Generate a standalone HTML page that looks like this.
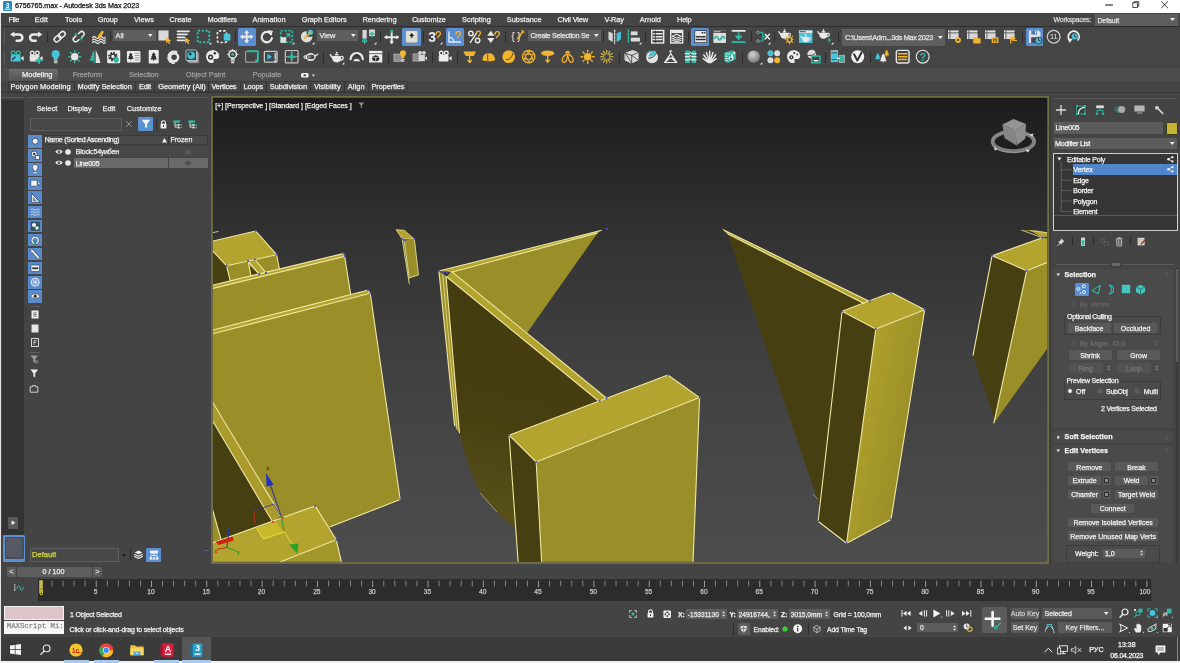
<!DOCTYPE html>
<html><head><meta charset="utf-8"><title>6756765.max - Autodesk 3ds Max 2023</title>
<style>
html,body{margin:0;padding:0}
body{width:1180px;height:663px;position:relative;overflow:hidden;background:#444;font-family:"Liberation Sans",sans-serif;}
.a{position:absolute;display:block}
.t{white-space:nowrap;letter-spacing:0;-webkit-text-stroke:0.25px currentColor}
svg{overflow:visible}
</style></head><body><div id="app" style="position:absolute;left:0;top:0;width:1180px;height:663px;will-change:transform;">
<div class="a" style="left:0px;top:0px;width:1180px;height:13px;background:#ffffff;"></div>
<div class="a" style="left:0px;top:13px;width:1180px;height:650px;background:#444444;"></div>
<svg class="a" style="left:3px;top:1px;" width="9" height="10" viewBox="0 0 9 10"><rect x="0" y="0" width="9" height="10" fill="#1f8fc0" rx="1.3" /><text x="4.5" y="6.6" font-size="6.5" font-weight="bold" fill="#fff" text-anchor="middle" font-family="Liberation Sans,sans-serif">3</text><rect x="1.6" y="7.6" width="5.8" height="1.2" fill="#d5ecf5" /></svg>
<div class="a t" style="top:1.2px;font-size:7.2px;line-height:10px;color:#111;left:14.9px;letter-spacing:-0.071px;">6756765.max - Autodesk 3ds Max 2023</div>
<svg class="a" style="left:1104px;top:0px;" width="70" height="12" viewBox="0 0 70 12"><path d="M1.5 5 H8.5" fill="none" stroke="#111" stroke-width="1.1" stroke-linecap="round" stroke-linejoin="round" /><rect x="28.8" y="2.8" width="4.6" height="4.6" fill="none" stroke="#222" stroke-width="0.8" /><path d="M30.2 2.8 V1.6 H34.8 V6.2 H33.4" fill="none" stroke="#222" stroke-width="0.8" stroke-linecap="round" stroke-linejoin="round" /><path d="M57.6 1.8 L63.6 7.8 M63.6 1.8 L57.6 7.8" fill="none" stroke="#222" stroke-width="0.9" stroke-linecap="round" stroke-linejoin="round" /></svg>
<div class="a" style="left:1.5px;top:13px;width:1178.5px;height:13.3px;background:#454545;"></div>
<div class="a" style="left:1.5px;top:26.3px;width:1178.5px;height:0.9px;background:#2f2f2f;"></div>
<div class="a t" style="top:14.6px;font-size:7.4px;line-height:10px;color:#ececec;left:8.5px;letter-spacing:-0.356px;">File</div>
<div class="a t" style="top:14.6px;font-size:7.4px;line-height:10px;color:#ececec;left:34.7px;letter-spacing:0.137px;">Edit</div>
<div class="a t" style="top:14.6px;font-size:7.4px;line-height:10px;color:#ececec;left:65px;letter-spacing:-0.015px;">Tools</div>
<div class="a t" style="top:14.6px;font-size:7.4px;line-height:10px;color:#ececec;left:97.8px;letter-spacing:-0.113px;">Group</div>
<div class="a t" style="top:14.6px;font-size:7.4px;line-height:10px;color:#ececec;left:133.9px;letter-spacing:0.139px;">Views</div>
<div class="a t" style="top:14.6px;font-size:7.4px;line-height:10px;color:#ececec;left:169.5px;letter-spacing:-0.035px;">Create</div>
<div class="a t" style="top:14.6px;font-size:7.4px;line-height:10px;color:#ececec;left:207.6px;letter-spacing:-0.069px;">Modifiers</div>
<div class="a t" style="top:14.6px;font-size:7.4px;line-height:10px;color:#ececec;left:252.5px;letter-spacing:0.022px;">Animation</div>
<div class="a t" style="top:14.6px;font-size:7.4px;line-height:10px;color:#ececec;left:301.7px;letter-spacing:-0.058px;">Graph Editors</div>
<div class="a t" style="top:14.6px;font-size:7.4px;line-height:10px;color:#ececec;left:362.4px;letter-spacing:0.006px;">Rendering</div>
<div class="a t" style="top:14.6px;font-size:7.4px;line-height:10px;color:#ececec;left:411.9px;letter-spacing:-0.117px;">Customize</div>
<div class="a t" style="top:14.6px;font-size:7.4px;line-height:10px;color:#ececec;left:462px;letter-spacing:0.001px;">Scripting</div>
<div class="a t" style="top:14.6px;font-size:7.4px;line-height:10px;color:#ececec;left:506.8px;letter-spacing:-0.008px;">Substance</div>
<div class="a t" style="top:14.6px;font-size:7.4px;line-height:10px;color:#ececec;left:557.6px;letter-spacing:-0.154px;">Civil View</div>
<div class="a t" style="top:14.6px;font-size:7.4px;line-height:10px;color:#ececec;left:604.4px;letter-spacing:-0.170px;">V-Ray</div>
<div class="a t" style="top:14.6px;font-size:7.4px;line-height:10px;color:#ececec;left:639.7px;letter-spacing:-0.015px;">Arnold</div>
<div class="a t" style="top:14.6px;font-size:7.4px;line-height:10px;color:#ececec;left:677px;letter-spacing:-0.180px;">Help</div>
<div class="a t" style="top:15.3px;font-size:7px;line-height:9px;color:#dcdcdc;left:1053.6px;letter-spacing:-0.266px;">Workspaces:</div>
<div class="a" style="left:1095px;top:14.2px;width:83.2px;height:11.6px;background:#5e5e5e;"></div>
<div class="a t" style="top:15.6px;font-size:7px;line-height:9px;color:#e6e6e6;left:1097.4px;letter-spacing:-0.083px;">Default</div>
<svg class="a" style="left:1169.6px;top:18.2px;" width="5" height="3" viewBox="0 0 5 3"><path d="M0 0 H5 L2.5 3 Z" fill="#eee" /></svg>
<div class="a" style="left:1.5px;top:27.2px;width:1178.5px;height:41.2px;background:#454545;"></div>
<div class="a" style="left:3.5px;top:29px;width:1px;height:17px;background:#5a5a5a;"></div>
<div class="a" style="left:3.5px;top:50px;width:1px;height:16px;background:#5a5a5a;"></div>
<div class="a" style="left:238px;top:28.2px;width:18px;height:17.6px;background:#5b8fd2;border-radius:1.5px;"></div>
<div class="a" style="left:402.4px;top:28.2px;width:18.4px;height:17.6px;background:#5b8fd2;border-radius:1.5px;"></div>
<div class="a" style="left:446px;top:28.2px;width:18px;height:17.6px;background:#5b8fd2;border-radius:1.5px;"></div>
<div class="a" style="left:691px;top:28.2px;width:18.4px;height:17.6px;background:#5b8fd2;border-radius:1.5px;"></div>
<div class="a" style="left:1025.8px;top:28.2px;width:17.2px;height:17.6px;background:#5b8fd2;border-radius:1.5px;"></div>
<svg class="a" style="left:8.8px;top:29.3px;" width="15.4" height="15.4" viewBox="0 0 16 16"><path d="M1.1 5.6 L5.6 2.6 V8.6 Z" fill="#e9e9e9" /><path d="M5.2 5.6 H10.6 a3.3 3.3 0 0 1 0 6.6 H8" fill="none" stroke="#e9e9e9" stroke-width="2.6" stroke-linecap="round" stroke-linejoin="round" stroke-linecap="butt"/></svg>
<svg class="a" style="left:27.8px;top:29.3px;" width="15.4" height="15.4" viewBox="0 0 16 16"><path d="M14.9 5.6 L10.4 2.6 V8.6 Z" fill="#e9e9e9" /><path d="M10.8 5.6 H5.4 a3.3 3.3 0 0 0 0 6.6 H8" fill="none" stroke="#e9e9e9" stroke-width="2.6" stroke-linecap="round" stroke-linejoin="round" stroke-linecap="butt"/></svg>
<svg class="a" style="left:51.7px;top:29.3px;" width="15.4" height="15.4" viewBox="0 0 16 16"><g transform="rotate(-42 8 8)"><rect x="1.2" y="5.5" width="7.6" height="5" fill="none" stroke="#e9e9e9" stroke-width="1.6" rx="2.5" /><rect x="7.2" y="5.5" width="7.6" height="5" fill="none" stroke="#e9e9e9" stroke-width="1.6" rx="2.5" /></g></svg>
<svg class="a" style="left:71.1px;top:29.3px;" width="15.4" height="15.4" viewBox="0 0 16 16"><g transform="rotate(-42 8 8)"><path d="M6.2 5.5 H3.7 a2.5 2.5 0 0 0 0 5 H6.2 M9.8 5.5 H12.3 a2.5 2.5 0 0 1 0 5 H9.8" fill="none" stroke="#e9e9e9" stroke-width="1.6" stroke-linecap="round" stroke-linejoin="round" /><path d="M8 3.2 V5 M8 11 V12.8 M6.3 3.8 L7 5.2 M9.7 12.2 L9 10.8" fill="none" stroke="#2fb8a3" stroke-width="1.1" stroke-linecap="round" stroke-linejoin="round" /></g></svg>
<svg class="a" style="left:90.8px;top:29.3px;" width="15.4" height="15.4" viewBox="0 0 16 16"><path d="M1.5 9 q1.8-2 3.6 0 t3.6 0 t3.6 0 t2.4-0.6 M1.5 11.6 q1.8-2 3.6 0 t3.6 0 t3.6 0 t2.4-0.6 M1.5 14.2 q1.8-2 3.6 0 t3.6 0 t3.6 0 t2.4-0.6" fill="none" stroke="#e9e9e9" stroke-width="1.2" stroke-linecap="round" stroke-linejoin="round" /><path d="M7 9.5 C6.5 7 9 5 10.5 2.5 C11.5 1 14 2 13 4 C12 6 10.5 8 8.8 10 Z" fill="#f3b42c" /></svg>
<svg class="a" style="left:156.6px;top:29.3px;" width="15.4" height="15.4" viewBox="0 0 16 16"><rect x="1.5" y="1.5" width="10.5" height="10.5" fill="#d9d9d9" /><path d="M9.5 8.5 L9.5 15 L11.3 13.3 L12.5 15.8 L13.8 15.2 L12.6 12.8 L15 12.6 Z" fill="#f3b42c" /></svg>
<svg class="a" style="left:176.3px;top:29.3px;" width="15.4" height="15.4" viewBox="0 0 16 16"><path d="M1.5 2.5 H13.5 M1.5 5.6 H11.5 M1.5 8.7 H9 M1.5 11.8 H9" fill="none" stroke="#e9e9e9" stroke-width="1.7" stroke-linecap="round" stroke-linejoin="round" stroke-linecap="butt"/><path d="M9.5 8.5 L9.5 15 L11.3 13.3 L12.5 15.8 L13.8 15.2 L12.6 12.8 L15 12.6 Z" fill="#f3b42c" /></svg>
<svg class="a" style="left:196.3px;top:29.3px;" width="15.4" height="15.4" viewBox="0 0 16 16"><rect x="1.8" y="1.8" width="12" height="12" fill="none" stroke="#2fb8a3" stroke-width="2" stroke-dasharray="2.4 1.6"/><path d="M13.5 16 L16 16 L16 13.5 Z" fill="#e9e9e9" /></svg>
<svg class="a" style="left:216px;top:29.3px;" width="15.4" height="15.4" viewBox="0 0 16 16"><rect x="1.5" y="2" width="9.5" height="12" fill="none" stroke="#e9e9e9" stroke-width="1.7" rx="1.5" stroke-dasharray="2.6 1.8"/><rect x="8" y="5" width="7" height="7" fill="#48c3d8" /></svg>
<svg class="a" style="left:239.3px;top:29.3px;" width="15.4" height="15.4" viewBox="0 0 16 16"><path d="M8 1 L10.6 4.2 H9 V7 H11.8 V5.4 L15 8 L11.8 10.6 V9 H9 V11.8 H10.6 L8 15 L5.4 11.8 H7 V9 H4.2 V10.6 L1 8 L4.2 5.4 V7 H7 V4.2 H5.4 Z" fill="#e9e9e9" /></svg>
<svg class="a" style="left:258.9px;top:29.3px;" width="15.4" height="15.4" viewBox="0 0 16 16"><path d="M12.6 5.4 A5.4 5.4 0 1 0 13.4 9.6" fill="none" stroke="#e9e9e9" stroke-width="2.3" stroke-linecap="round" stroke-linejoin="round" /><path d="M9.2 1 L14.6 2 L12.2 7 Z" fill="#e9e9e9" /></svg>
<svg class="a" style="left:278.8px;top:29.3px;" width="15.4" height="15.4" viewBox="0 0 16 16"><rect x="1.8" y="1.8" width="12" height="12" fill="none" stroke="#2fb8a3" stroke-width="1.7" stroke-dasharray="2.4 1.6"/><rect x="1.5" y="8.5" width="6" height="6" fill="#dcdcdc" /><path d="M7.5 5 H11 V8.5 M11 5 L8 8" fill="none" stroke="#2fb8a3" stroke-width="1.4" stroke-linecap="round" stroke-linejoin="round" /><path d="M13.5 16 L16 16 L16 13.5 Z" fill="#e9e9e9" /></svg>
<svg class="a" style="left:298.8px;top:29.3px;" width="15.4" height="15.4" viewBox="0 0 16 16"><path d="M8 8 L8 2 A6 6 0 1 0 14 8 Z" fill="#dcdcdc" /><circle cx="12" cy="3.5" r="2.6" fill="#48c3d8" /><path d="M6 9.5 L11.5 4" fill="none" stroke="#f3b42c" stroke-width="1.6" stroke-linecap="round" stroke-linejoin="round" /><path d="M13.5 16 L16 16 L16 13.5 Z" fill="#e9e9e9" /></svg>
<svg class="a" style="left:361.3px;top:29.3px;" width="15.4" height="15.4" viewBox="0 0 16 16"><rect x="1.5" y="1" width="4.5" height="9" fill="#d5d5d5" /><rect x="9" y="1" width="5" height="6" fill="#d5d5d5" stroke="#e9e9e9" stroke-width="0.8" /><path d="M3.8 15 V10 M1.8 12 L3.8 10 L5.8 12 M1.8 13.2 H5.8" fill="none" stroke="#2fb8a3" stroke-width="1.3" stroke-linecap="round" stroke-linejoin="round" /><path d="M11.5 8.5 V3.5 M9.5 5.5 L11.5 3.5 L13.5 5.5" fill="none" stroke="#2fb8a3" stroke-width="1.3" stroke-linecap="round" stroke-linejoin="round" /><path d="M13.5 16 L16 16 L16 13.5 Z" fill="#e9e9e9" /></svg>
<svg class="a" style="left:384.3px;top:29.3px;" width="15.4" height="15.4" viewBox="0 0 16 16"><path d="M8 3.5 V14.5 M1.5 8.5 H14.5" fill="none" stroke="#e9e9e9" stroke-width="2" stroke-linecap="round" stroke-linejoin="round" /><path d="M8 14.8 L6.6 12.8 M8 14.8 L9.4 12.8 M1.2 8.5 L3 7.2 M1.2 8.5 L3 9.8 M14.8 8.5 L13 7.2 M14.8 8.5 L13 9.8" fill="none" stroke="#e9e9e9" stroke-width="1.2" stroke-linecap="round" stroke-linejoin="round" /><circle cx="8" cy="2.2" r="1.7" fill="#2fb8a3" /></svg>
<svg class="a" style="left:403.9px;top:29.3px;" width="15.4" height="15.4" viewBox="0 0 16 16"><rect x="1.2" y="1.2" width="13.6" height="13.6" fill="#8a8a86" rx="1.8" /><rect x="2" y="2" width="12" height="12" fill="#deded6" rx="1.2" /><path d="M8 4.2 L5.4 7.2 H7.1 V9.2 H8.9 V7.2 H10.6 Z" fill="#222" /></svg>
<svg class="a" style="left:427px;top:29.3px;" width="15.4" height="15.4" viewBox="0 0 16 16"><text x="5.4" y="13.4" font-family="Liberation Sans,sans-serif" font-size="14.5" fill="#e9e9e9" text-anchor="middle" font-weight="bold">3</text><path d="M9.5 5.5 C9 2.5 13.5 1.5 14 4.5 C14.3 6.5 11.5 7 11 9" fill="none" stroke="#f3b42c" stroke-width="1.3" stroke-linecap="round" stroke-linejoin="round" /><path d="M13.5 16 L16 16 L16 13.5 Z" fill="#e9e9e9" /></svg>
<svg class="a" style="left:447.3px;top:29.3px;" width="15.4" height="15.4" viewBox="0 0 16 16"><path d="M2 3 V13.5 H14 M2 8.5 A5 5 0 0 1 7 13.5" fill="none" stroke="#e9e9e9" stroke-width="1.4" stroke-linecap="round" stroke-linejoin="round" /><path d="M9.5 5.5 C9 2.5 13.5 1.5 14 4.5 C14.3 6.5 11.5 7 11 9" fill="none" stroke="#f3b42c" stroke-width="1.3" stroke-linecap="round" stroke-linejoin="round" /></svg>
<svg class="a" style="left:466.8px;top:29.3px;" width="15.4" height="15.4" viewBox="0 0 16 16"><circle cx="4" cy="4.6" r="2.3" fill="none" stroke="#e9e9e9" stroke-width="1.5" /><circle cx="11" cy="12" r="2.3" fill="none" stroke="#e9e9e9" stroke-width="1.5" /><path d="M3.5 14 L10 4" fill="none" stroke="#e9e9e9" stroke-width="1.5" stroke-linecap="round" stroke-linejoin="round" /><path d="M9.8 4.5 C9.5 2 13.5 1.2 14 4 C14.2 5.5 12.5 6 12 7.5" fill="none" stroke="#f3b42c" stroke-width="1.3" stroke-linecap="round" stroke-linejoin="round" /></svg>
<svg class="a" style="left:486.3px;top:29.3px;" width="15.4" height="15.4" viewBox="0 0 16 16"><path d="M5 1.8 L8.8 7 H1.2 Z M5 14.5 L8.8 9.3 H1.2 Z" fill="#e9e9e9" /><path d="M9.5 5.5 C9 2.5 13.5 1.5 14 4.5 C14.3 6.5 11.5 7 11 9" fill="none" stroke="#f3b42c" stroke-width="1.3" stroke-linecap="round" stroke-linejoin="round" /></svg>
<svg class="a" style="left:510px;top:29.3px;" width="15.4" height="15.4" viewBox="0 0 16 16"><text x="3.2" y="11.8" font-family="Liberation Sans,sans-serif" font-size="11" fill="#e9e9e9" text-anchor="middle">{</text><text x="9.4" y="11.8" font-family="Liberation Sans,sans-serif" font-size="11" fill="#e9e9e9" text-anchor="middle">}</text><path d="M8 10 L13.5 2.5" fill="none" stroke="#f3b42c" stroke-width="1.7" stroke-linecap="round" stroke-linejoin="round" /><path d="M12.2 1.6 L14.6 3.4" fill="none" stroke="#f3b42c" stroke-width="1.2" stroke-linecap="round" stroke-linejoin="round" /></svg>
<svg class="a" style="left:606.6px;top:29.3px;" width="15.4" height="15.4" viewBox="0 0 16 16"><path d="M1.5 2.5 L6 4.5 V13.5 L1.5 11 Z" fill="#d5d5d5" /><path d="M14.5 2.5 L10 4.5 V13.5 L14.5 11 Z" fill="#48c3d8" /><path d="M8 1 V15" fill="none" stroke="#e9e9e9" stroke-width="1.2" stroke-linecap="round" stroke-linejoin="round" stroke-dasharray="2 1.4"/></svg>
<svg class="a" style="left:625.7px;top:29.3px;" width="15.4" height="15.4" viewBox="0 0 16 16"><path d="M2.5 1 V15" fill="none" stroke="#2fb8a3" stroke-width="1.6" stroke-linecap="round" stroke-linejoin="round" stroke-dasharray="2 1.5"/><rect x="5" y="2.5" width="7" height="4" fill="#dcdcdc" /><rect x="5" y="9" width="9.5" height="4" fill="#dcdcdc" /><path d="M13.5 16 L16 16 L16 13.5 Z" fill="#e9e9e9" /></svg>
<svg class="a" style="left:649.5px;top:29.3px;" width="15.4" height="15.4" viewBox="0 0 16 16"><rect x="1.8" y="1.5" width="12.4" height="13" fill="none" stroke="#e9e9e9" stroke-width="1.5" /><path d="M3.5 5 H12.5 M3.5 8 H12.5 M3.5 11 H12.5" fill="none" stroke="#e9e9e9" stroke-width="1.5" stroke-linecap="round" stroke-linejoin="round" stroke-linecap="butt"/><path d="M5.5 2 V14" fill="none" stroke="#333" stroke-width="0.8" stroke-linecap="round" stroke-linejoin="round" /></svg>
<svg class="a" style="left:669.2px;top:29.3px;" width="15.4" height="15.4" viewBox="0 0 16 16"><rect x="1.8" y="1.5" width="12.4" height="13" fill="none" stroke="#e9e9e9" stroke-width="1.5" /><rect x="2.5" y="2" width="11" height="2.2" fill="#e9e9e9" /><path d="M8 5.5 L12.5 7.5 L8 9.5 L3.5 7.5 Z M3.5 9.6 L8 11.6 L12.5 9.6 M3.5 11.6 L8 13.6 L12.5 11.6" fill="none" stroke="#e9e9e9" stroke-width="1.1" stroke-linecap="round" stroke-linejoin="round" /></svg>
<svg class="a" style="left:692.5px;top:29.3px;" width="15.4" height="15.4" viewBox="0 0 16 16"><rect x="1.4" y="1.4" width="13.2" height="13.2" fill="#3a3a3a" rx="1.2" /><rect x="2.2" y="2.2" width="11.6" height="11.6" fill="#e8e8e8" rx="0.6" /><path d="M3.5 8 H7.3 M8.7 8 H12.5 M3.5 11 H7.3 M8.7 11 H12.5" fill="none" stroke="#333" stroke-width="1.6" stroke-linecap="round" stroke-linejoin="round" stroke-linecap="butt"/><rect x="9" y="3" width="1.6" height="1.6" fill="#333" /><rect x="11.2" y="3" width="1.6" height="1.6" fill="#333" /></svg>
<svg class="a" style="left:712.3px;top:29.3px;" width="15.4" height="15.4" viewBox="0 0 16 16"><rect x="1.5" y="1.5" width="13" height="13" fill="#dedede" /><rect x="1.5" y="1.5" width="13" height="2.6" fill="#444" /><path d="M2.8 2.8 h1.2 m1 0 h1.2 m1 0 h1.2" fill="none" stroke="#e9e9e9" stroke-width="0.9" stroke-linecap="round" stroke-linejoin="round" /><path d="M3 9.5 q1.6-3.6 3.3 0 t3.3 0 t3.3 0" fill="none" stroke="#2fb8a3" stroke-width="1.8" stroke-linecap="round" stroke-linejoin="round" /></svg>
<svg class="a" style="left:731.3px;top:29.3px;" width="15.4" height="15.4" viewBox="0 0 16 16"><path d="M1.5 2 H14.5" fill="none" stroke="#e9e9e9" stroke-width="1.7" stroke-linecap="round" stroke-linejoin="round" /><path d="M8 3.8 V9.5 M5 7.5 L8 10.8 L11 7.5 Z" fill="#2fb8a3" stroke="#2fb8a3" stroke-width="1.5" stroke-linecap="round" stroke-linejoin="round" /><path d="M1.5 13.6 H14.5" fill="none" stroke="#2fb8a3" stroke-width="1.9" stroke-linecap="round" stroke-linejoin="round" /></svg>
<svg class="a" style="left:755.3px;top:29.3px;" width="15.4" height="15.4" viewBox="0 0 16 16"><circle cx="3" cy="3.5" r="1.4" fill="none" stroke="#9b9b9b" stroke-width="1" /><circle cx="3" cy="12.5" r="1.4" fill="none" stroke="#9b9b9b" stroke-width="1" /><path d="M4.6 3.5 H8 V12.5 H4.6 M8 8 H10" fill="none" stroke="#2fb8a3" stroke-width="1.2" stroke-linecap="round" stroke-linejoin="round" /><path d="M10.5 5.5 L15 10.5 M15 5.5 L10.5 10.5" fill="none" stroke="#e9e9e9" stroke-width="1.5" stroke-linecap="round" stroke-linejoin="round" /><path d="M13.5 16 L16 16 L16 13.5 Z" fill="#e9e9e9" /></svg>
<svg class="a" style="left:778.8px;top:29.3px;" width="15.4" height="15.4" viewBox="0 0 16 16"><g transform="translate(-1.5,-2.5) scale(0.9)"><path d="M3.2 9.2 C3.2 5.8 12.8 5.8 12.8 9.2 C12.8 12.4 11 14 8 14 C5 14 3.2 12.4 3.2 9.2 Z M5.8 6.2 C6.2 4.6 9.8 4.6 10.2 6.2 Z M3.6 10 C1.8 9 1.4 6.8 0.4 5.8 L1.8 5 C2.6 6.4 3.2 7.2 4.2 7.8 Z" fill="#e9e9e9" /><circle cx="8" cy="3.8" r="1" fill="#e9e9e9" /><path d="M12.4 7.8 C15.4 6.8 15.8 10.8 12.4 11.8" fill="none" stroke="#e9e9e9" stroke-width="1.3" stroke-linecap="round" stroke-linejoin="round" /></g><circle cx="11" cy="11.2" r="2.3" fill="none" stroke="#f3b42c" stroke-width="1.5" /><path d="M11 8.299999999999999 v-1.2 m0 7 v1.2 m-3.5 -4.7 h-1.2 m7 0 h1.2 m-5.9 -2.4 l-0.8 -0.8 m5.7 5.7 l0.8 0.8 m0 -6.5 l-0.8 0.8 m-4.9 4.9 l-0.8 0.8" fill="none" stroke="#f3b42c" stroke-width="1.1" stroke-linecap="round" stroke-linejoin="round" /></svg>
<svg class="a" style="left:798.3px;top:29.3px;" width="15.4" height="15.4" viewBox="0 0 16 16"><rect x="1" y="1.5" width="14" height="13" fill="#48c3d8" /><rect x="1" y="1.5" width="14" height="2.6" fill="#e6e6e6" /><path d="M2.3 2.8 h1.1 m0.9 0 h1.1 m0.9 0 h1.1" fill="none" stroke="#333" stroke-width="1" stroke-linecap="round" stroke-linejoin="round" /><g transform="translate(1.8,2.8) scale(0.78)"><path d="M3.2 9.2 C3.2 5.8 12.8 5.8 12.8 9.2 C12.8 12.4 11 14 8 14 C5 14 3.2 12.4 3.2 9.2 Z M5.8 6.2 C6.2 4.6 9.8 4.6 10.2 6.2 Z M3.6 10 C1.8 9 1.4 6.8 0.4 5.8 L1.8 5 C2.6 6.4 3.2 7.2 4.2 7.8 Z" fill="#e9e9e9" /><circle cx="8" cy="3.8" r="1" fill="#e9e9e9" /><path d="M12.4 7.8 C15.4 6.8 15.8 10.8 12.4 11.8" fill="none" stroke="#e9e9e9" stroke-width="1.3" stroke-linecap="round" stroke-linejoin="round" /></g></svg>
<svg class="a" style="left:817.9px;top:29.3px;" width="15.4" height="15.4" viewBox="0 0 16 16"><g transform="translate(-1.5,-2.5) scale(0.9)"><path d="M3.2 9.2 C3.2 5.8 12.8 5.8 12.8 9.2 C12.8 12.4 11 14 8 14 C5 14 3.2 12.4 3.2 9.2 Z M5.8 6.2 C6.2 4.6 9.8 4.6 10.2 6.2 Z M3.6 10 C1.8 9 1.4 6.8 0.4 5.8 L1.8 5 C2.6 6.4 3.2 7.2 4.2 7.8 Z" fill="#e9e9e9" /><circle cx="8" cy="3.8" r="1" fill="#e9e9e9" /><path d="M12.4 7.8 C15.4 6.8 15.8 10.8 12.4 11.8" fill="none" stroke="#e9e9e9" stroke-width="1.3" stroke-linecap="round" stroke-linejoin="round" /></g><path d="M12 8.5 L9.6 12 H11.6 L10.8 15 L13.8 10.8 H11.8 Z" fill="#2fb8a3" /><path d="M13.5 16 L16 16 L16 13.5 Z" fill="#e9e9e9" /></svg>
<svg class="a" style="left:947.3px;top:29.3px;" width="15.4" height="15.4" viewBox="0 0 16 16"><rect x="1.5" y="2" width="10" height="8" fill="#d9d9d9" /><rect x="1.5" y="2" width="10" height="8" fill="none" stroke="#e9e9e9" stroke-width="0.9" /><path d="M3 2 V11 M1.5 4 H13" fill="none" stroke="#333" stroke-width="0.7" stroke-linecap="round" stroke-linejoin="round" /><circle cx="11.5" cy="11.5" r="3" fill="#f3b42c" /><circle cx="11.5" cy="11.5" r="1.1" fill="#333" /></svg>
<svg class="a" style="left:966px;top:29.3px;" width="15.4" height="15.4" viewBox="0 0 16 16"><rect x="1.5" y="2" width="10" height="8" fill="#d9d9d9" /><rect x="1.5" y="2" width="10" height="8" fill="none" stroke="#e9e9e9" stroke-width="0.9" /><path d="M3 2 V11 M1.5 4 H13" fill="none" stroke="#333" stroke-width="0.7" stroke-linecap="round" stroke-linejoin="round" /><path d="M7.5 8.5 H10.5 L11.3 9.6 H15.2 V15 H7.5 Z" fill="#f3b42c" /></svg>
<svg class="a" style="left:984.3px;top:29.3px;" width="15.4" height="15.4" viewBox="0 0 16 16"><rect x="1.5" y="2" width="10" height="8" fill="#d9d9d9" /><rect x="1.5" y="2" width="10" height="8" fill="none" stroke="#e9e9e9" stroke-width="0.9" /><path d="M3 2 V11 M1.5 4 H13" fill="none" stroke="#333" stroke-width="0.7" stroke-linecap="round" stroke-linejoin="round" /><rect x="8" y="8.5" width="7" height="6" fill="#f3b42c" /><rect x="9.6" y="10" width="3.8" height="3" fill="#333" /><rect x="10.4" y="10.8" width="2.2" height="1.4" fill="#f3b42c" /></svg>
<svg class="a" style="left:1002.6px;top:29.3px;" width="15.4" height="15.4" viewBox="0 0 16 16"><rect x="1.5" y="2" width="10" height="8" fill="#d9d9d9" /><rect x="1.5" y="2" width="10" height="8" fill="none" stroke="#e9e9e9" stroke-width="0.9" /><path d="M3 2 V11 M1.5 4 H13" fill="none" stroke="#333" stroke-width="0.7" stroke-linecap="round" stroke-linejoin="round" /><path d="M8 14.5 V9 M8 9 H11 M9.6 8 L12.4 9.8 L9.6 11.6 Z M11 12 H14" fill="#f3b42c" stroke="#f3b42c" stroke-width="1.2" stroke-linecap="round" stroke-linejoin="round" /></svg>
<svg class="a" style="left:1026.7px;top:29.3px;" width="15.4" height="15.4" viewBox="0 0 16 16"><path d="M2 1.5 H12 L14 3.5 V14.5 H2 Z" fill="#e3e3e3" /><rect x="4.5" y="1.5" width="6" height="4.3" fill="#4a78b8" /><rect x="8.3" y="2.2" width="1.4" height="2.8" fill="#e3e3e3" /><rect x="4.3" y="8.6" width="7.4" height="5.9" fill="#3d4a60" /><circle cx="12" cy="12" r="3.6" fill="#48c3d8" stroke="#2c2c2c" stroke-width="0.8" /><path d="M12 10 V12.2 H13.8" fill="none" stroke="#333" stroke-width="1" stroke-linecap="round" stroke-linejoin="round" /></svg>
<svg class="a" style="left:1046.3px;top:29.3px;" width="15.4" height="15.4" viewBox="0 0 16 16"><circle cx="8" cy="8" r="6.6" fill="none" stroke="#cfcfcf" stroke-width="1.3" /><text x="8" y="10.7" font-family="Liberation Sans,sans-serif" font-size="7.6" fill="#e0e0e0" text-anchor="middle">11</text></svg>
<svg class="a" style="left:1066.1px;top:29.3px;" width="15.4" height="15.4" viewBox="0 0 16 16"><path d="M4.2 12 A5.6 5.6 0 1 1 12.6 11.2" fill="none" stroke="#e9e9e9" stroke-width="1.9" stroke-linecap="round" stroke-linejoin="round" /><path d="M1.6 9.6 L6.8 10.4 L3.8 14.6 Z" fill="#e9e9e9" /><circle cx="9" cy="7.8" r="3.1" fill="#48c3d8" /><path d="M9 6 V8 H10.4" fill="none" stroke="#333" stroke-width="0.9" stroke-linecap="round" stroke-linejoin="round" /></svg>
<div class="a" style="left:47.15px;top:31.4px;width:0.9px;height:10.8px;background:#2c2c2c;"></div>
<div class="a" style="left:109.55px;top:31.4px;width:0.9px;height:10.8px;background:#2c2c2c;"></div>
<div class="a" style="left:234.95px;top:31.4px;width:0.9px;height:10.8px;background:#2c2c2c;"></div>
<div class="a" style="left:379.85px;top:31.4px;width:0.9px;height:10.8px;background:#2c2c2c;"></div>
<div class="a" style="left:422.75px;top:31.4px;width:0.9px;height:10.8px;background:#2c2c2c;"></div>
<div class="a" style="left:505.25px;top:31.4px;width:0.9px;height:10.8px;background:#2c2c2c;"></div>
<div class="a" style="left:602.55px;top:31.4px;width:0.9px;height:10.8px;background:#2c2c2c;"></div>
<div class="a" style="left:645.25px;top:31.4px;width:0.9px;height:10.8px;background:#2c2c2c;"></div>
<div class="a" style="left:687.95px;top:31.4px;width:0.9px;height:10.8px;background:#2c2c2c;"></div>
<div class="a" style="left:750.55px;top:31.4px;width:0.9px;height:10.8px;background:#2c2c2c;"></div>
<div class="a" style="left:774.35px;top:31.4px;width:0.9px;height:10.8px;background:#2c2c2c;"></div>
<div class="a" style="left:838.15px;top:31.4px;width:0.9px;height:10.8px;background:#2c2c2c;"></div>
<div class="a" style="left:1021.55px;top:31.4px;width:0.9px;height:10.8px;background:#2c2c2c;"></div>
<div class="a" style="left:113px;top:29.6px;width:42.6px;height:11.6px;background:#5e5e5e;"></div>
<div class="a t" style="top:30.6px;font-size:7.3px;line-height:10px;color:#e2e2e2;left:115.6px;">All</div>
<svg class="a" style="left:148.4px;top:34.2px;" width="4.6" height="3" viewBox="0 0 4.6 3"><path d="M0 0 H4.6 L2.3 3 Z" fill="#f0f0f0" /></svg>
<div class="a" style="left:316.6px;top:29.6px;width:41.2px;height:11.6px;background:#5e5e5e;"></div>
<div class="a t" style="top:30.6px;font-size:7.3px;line-height:10px;color:#e2e2e2;left:319.6px;">View</div>
<svg class="a" style="left:350.6px;top:34.2px;" width="4.6" height="3" viewBox="0 0 4.6 3"><path d="M0 0 H4.6 L2.3 3 Z" fill="#f0f0f0" /></svg>
<div class="a" style="left:528px;top:29.6px;width:73px;height:11.6px;background:#5e5e5e;"></div>
<div class="a t" style="top:30.6px;font-size:7.3px;line-height:10px;color:#e2e2e2;left:530.4px;letter-spacing:-0.322px;">Create Selection Se</div>
<svg class="a" style="left:593.8px;top:34.2px;" width="4.6" height="3" viewBox="0 0 4.6 3"><path d="M0 0 H4.6 L2.3 3 Z" fill="#f0f0f0" /></svg>
<div class="a" style="left:842px;top:29.2px;width:103px;height:17.2px;background:#5e5e5e;"></div>
<div class="a t" style="top:33px;font-size:7.3px;line-height:10px;color:#e2e2e2;left:845px;letter-spacing:-0.347px;">C:\Users\Adm...3ds Max 2023</div>
<svg class="a" style="left:937.8px;top:36.4px;" width="4.6" height="3" viewBox="0 0 4.6 3"><path d="M0 0 H4.6 L2.3 3 Z" fill="#f0f0f0" /></svg>
<svg class="a" style="left:8.5px;top:49.4px;" width="15.4" height="15.4" viewBox="0 0 16 16"><circle cx="4.4" cy="4.2" r="2.6" fill="#2fb8a3" /><circle cx="9.7" cy="4.2" r="2.6" fill="#2fb8a3" /><circle cx="4.4" cy="4.2" r="1.2" fill="#333" /><circle cx="9.7" cy="4.2" r="1.2" fill="#333" /><rect x="1.8" y="6.2" width="10.2" height="6.8" fill="#48c3d8" rx="1" /><path d="M12 9.5 L15.2 7.2 V12.2 Z" fill="#e9e9e9" /><path d="M3.6 11 L6.4 8.4" fill="none" stroke="#333" stroke-width="1.3" stroke-linecap="round" stroke-linejoin="round" /></svg>
<svg class="a" style="left:28.1px;top:49.4px;" width="15.4" height="15.4" viewBox="0 0 16 16"><circle cx="4.4" cy="4.2" r="2.6" fill="#e3e3e3" /><circle cx="9.7" cy="4.2" r="2.6" fill="#e3e3e3" /><circle cx="4.4" cy="4.2" r="1.2" fill="#333" /><circle cx="9.7" cy="4.2" r="1.2" fill="#333" /><rect x="1.8" y="6.2" width="10.2" height="6.8" fill="#e3e3e3" rx="1" /><path d="M12 9.5 L15.2 7.2 V12.2 Z" fill="#e9e9e9" /><path d="M11.5 9 V14.5 M8.8 11.8 H14.2" fill="none" stroke="#2fb8a3" stroke-width="2.1" stroke-linecap="round" stroke-linejoin="round" /></svg>
<svg class="a" style="left:47.9px;top:49.4px;" width="15.4" height="15.4" viewBox="0 0 16 16"><path d="M8 1 C3.6 1 2.4 6 5.6 9.4 C6 10 6.2 10.8 6.2 11.4 H9.8 C9.8 10.8 10 10 10.4 9.4 C13.6 6 12.4 1 8 1 Z" fill="#48c3d8" /><path d="M6.4 12.6 H9.6 M6.8 14.2 H9.2" fill="none" stroke="#e9e9e9" stroke-width="1.1" stroke-linecap="round" stroke-linejoin="round" /></svg>
<svg class="a" style="left:67.3px;top:49.4px;" width="15.4" height="15.4" viewBox="0 0 16 16"><circle cx="8" cy="8" r="3.9" fill="#e3e3e3" /><path d="M8 1.8 V2.9 M8 13.1 V14.2 M1.8 8 H2.9 M13.1 8 H14.2 M3.6 3.6 L4.4 4.4 M11.6 11.6 L12.4 12.4 M12.4 3.6 L11.6 4.4 M3.6 12.4 L4.4 11.6" fill="none" stroke="#2fb8a3" stroke-width="1.6" stroke-linecap="round" stroke-linejoin="round" /></svg>
<svg class="a" style="left:87px;top:49.4px;" width="15.4" height="15.4" viewBox="0 0 16 16"><path d="M9 1 L9 14.5 H14 C13 10 11 4 9 1 Z" fill="#e3e3e3" /><path d="M7.5 1.2 l-2.6 4 h1.1 l-2.3 3.2 h1.2 l-2.7 3.8 h4.6 v2.3 h1.2 Z" fill="#2fb8a3" /></svg>
<svg class="a" style="left:106.4px;top:49.4px;" width="15.4" height="15.4" viewBox="0 0 16 16"><rect x="1.2" y="1.2" width="13.6" height="13.6" fill="#ececec" rx="1.4" /><circle cx="7.2" cy="7.8" r="3.6" fill="none" stroke="#2e2e2e" stroke-width="2.6" stroke-dasharray="1.7 1.1"/><circle cx="7.2" cy="7.8" r="2.5" fill="none" stroke="#2e2e2e" stroke-width="1.4" /><circle cx="10.6" cy="11.4" r="2.8" fill="#2fb8a3" /></svg>
<svg class="a" style="left:126.3px;top:49.4px;" width="15.4" height="15.4" viewBox="0 0 16 16"><rect x="1" y="2" width="14" height="12" fill="#ececec" rx="1" /><g transform="translate(1.2,2.8) scale(0.62)"><path d="M6 1.5 l-3 4 h1.3 l-2.3 3.2 h1.4 l-2.4 3.5 h4.3 v2 h1.4 v-2 h4.3 l-2.4 -3.5 h1.4 l-2.3 -3.2 h1.3 Z" fill="#2e2e2e" /></g><path d="M9.5 4.5 H13.5 M9.5 6.8 H13.5 M9.5 9.1 H13.5 M9.5 11.4 H13.5" fill="none" stroke="#9b9b9b" stroke-width="1.1" stroke-linecap="round" stroke-linejoin="round" stroke-linecap="butt"/></svg>
<svg class="a" style="left:145.9px;top:49.4px;" width="15.4" height="15.4" viewBox="0 0 16 16"><rect x="2.8" y="1" width="10.4" height="14" fill="#ececec" rx="1" /><g transform="translate(2.6,2.2) scale(0.72)"><path d="M7.5 1.5 l-3 4 h1.3 l-2.3 3.2 h1.4 l-2.4 3.5 h4.3 v2 h1.4 v-2 h4.3 l-2.4 -3.5 h1.4 l-2.3 -3.2 h1.3 Z" fill="#2e2e2e" /></g></svg>
<svg class="a" style="left:166.1px;top:49.4px;" width="15.4" height="15.4" viewBox="0 0 16 16"><circle cx="8.4" cy="8.6" r="4.2" fill="none" stroke="#e9e9e9" stroke-width="2.6" /><path d="M3.1 5.6 A6.1 6.1 0 0 0 8.4 14.7 M3.1 5.6 A6.1 6.1 0 0 1 11 3.1" fill="none" stroke="#e9e9e9" stroke-width="2" stroke-linecap="round" stroke-linejoin="round" stroke-dasharray="1.8 1.7" stroke-linecap="butt"/></svg>
<svg class="a" style="left:185.2px;top:49.4px;" width="15.4" height="15.4" viewBox="0 0 16 16"><rect x="3.6" y="3.8" width="11" height="11" fill="#8d8d8d" rx="1" /><rect x="2.2" y="2.4" width="11" height="11" fill="#b5b5b5" rx="1" /><rect x="1" y="1" width="11" height="11" fill="#2b4c5a" stroke="#d0d0d0" stroke-width="0.8" rx="1" /><circle cx="6.4" cy="6.4" r="3.9" fill="#48c3d8" /><circle cx="5.4" cy="5.2" r="1.5" fill="#1f2f3a" /></svg>
<svg class="a" style="left:204.9px;top:49.4px;" width="15.4" height="15.4" viewBox="0 0 16 16"><path d="M8 1.4 C3.5 1.4 1 4.8 1.2 8.2 C1.4 12 4.4 14.6 7.4 14.6 C9.4 14.6 9.4 12.8 8.8 12 C8.2 11 9 10.2 10.2 10.4 C13 10.8 14.8 9.6 14.8 7.2 C14.8 4 12 1.4 8 1.4 Z" fill="#ececec" /><circle cx="5.8" cy="8.4" r="2.7" fill="#2e2e2e" /><circle cx="5.8" cy="8.4" r="1.2" fill="#ececec" /><circle cx="10.2" cy="4.4" r="1.3" fill="#2e2e2e" /></svg>
<svg class="a" style="left:224.9px;top:49.4px;" width="15.4" height="15.4" viewBox="0 0 16 16"><circle cx="8" cy="5.6" r="3.9" fill="none" stroke="#e9e9e9" stroke-width="1.6" /><circle cx="8" cy="5.6" r="1.5" fill="#2fb8a3" /><path d="M8 0.6 V1.4 M3.2 5.6 H2.4 M13.6 5.6 H12.8 M4.6 2.2 L4 1.6 M11.4 2.2 L12 1.6" fill="none" stroke="#e9e9e9" stroke-width="1" stroke-linecap="round" stroke-linejoin="round" /><path d="M6.4 10.6 H9.6 M6.4 12.4 H9.6 M6.9 14.2 H9.1" fill="none" stroke="#e9e9e9" stroke-width="1.2" stroke-linecap="round" stroke-linejoin="round" /></svg>
<svg class="a" style="left:244.3px;top:49.4px;" width="15.4" height="15.4" viewBox="0 0 16 16"><rect x="1.6" y="2.4" width="12.8" height="11.2" fill="none" stroke="#9b9b9b" stroke-width="1.3" rx="1" /><path d="M4 2.4 H14.4 V12" fill="none" stroke="#2fb8a3" stroke-width="2" stroke-linecap="round" stroke-linejoin="round" /><rect x="11.6" y="11" width="2.8" height="2.6" fill="#2fb8a3" /></svg>
<svg class="a" style="left:263.3px;top:49.4px;" width="15.4" height="15.4" viewBox="0 0 16 16"><rect x="1.4" y="2.4" width="13.2" height="11.2" fill="none" stroke="#c9c9c9" stroke-width="1.3" rx="1" /><rect x="2.6" y="3.6" width="8.6" height="8.8" fill="#3b4b55" /><path d="M4.6 5.2 L9.4 8 L4.6 10.8 Z" fill="#48c3d8" /><rect x="12" y="4" width="1.8" height="7" fill="#c9c9c9" /><rect x="11.8" y="11.8" width="2.2" height="2" fill="#e9e9e9" /></svg>
<svg class="a" style="left:283.7px;top:49.4px;" width="15.4" height="15.4" viewBox="0 0 16 16"><rect x="1.4" y="1.6" width="13.2" height="12.8" fill="none" stroke="#c9c9c9" stroke-width="1.2" rx="1" /><path d="M8 1.6 V14.4 M1.4 8 H14.6" fill="none" stroke="#9b9b9b" stroke-width="1.2" stroke-linecap="round" stroke-linejoin="round" /><path d="M8 5.4 V10.6 M5 8 H11" fill="none" stroke="#2fb8a3" stroke-width="2.2" stroke-linecap="round" stroke-linejoin="round" /></svg>
<svg class="a" style="left:302.8px;top:49.4px;" width="15.4" height="15.4" viewBox="0 0 16 16"><ellipse cx="8" cy="8.2" rx="4.6" ry="3.2" fill="none" stroke="#e9e9e9" stroke-width="1.3" /><path d="M12.4 7.4 C14 6.6 14.6 6 15.4 5 M3.6 7.6 C1.4 6.4 0.4 7.8 1.6 9.4 L3.8 9.8 M5.4 11.6 H10.6 M6.6 5 H9.4" fill="none" stroke="#e9e9e9" stroke-width="1.2" stroke-linecap="round" stroke-linejoin="round" /><circle cx="6.4" cy="8.2" r="1.2" fill="#333" stroke="#e9e9e9" stroke-width="0.6" /></svg>
<svg class="a" style="left:329.2px;top:49.4px;" width="15.4" height="15.4" viewBox="0 0 16 16"><path d="M3.2 9.2 C3.2 5.8 12.8 5.8 12.8 9.2 C12.8 12.4 11 14 8 14 C5 14 3.2 12.4 3.2 9.2 Z M5.8 6.2 C6.2 4.6 9.8 4.6 10.2 6.2 Z M3.6 10 C1.8 9 1.4 6.8 0.4 5.8 L1.8 5 C2.6 6.4 3.2 7.2 4.2 7.8 Z" fill="#e9e9e9" /><circle cx="8" cy="3.8" r="1" fill="#e9e9e9" /><path d="M12.4 7.8 C15.4 6.8 15.8 10.8 12.4 11.8" fill="none" stroke="#e9e9e9" stroke-width="1.3" stroke-linecap="round" stroke-linejoin="round" /><path d="M13.5 16 L16 16 L16 13.5 Z" fill="#e9e9e9" /></svg>
<svg class="a" style="left:348.8px;top:49.4px;" width="15.4" height="15.4" viewBox="0 0 16 16"><path d="M1.6 10.6 A6.4 6.4 0 0 1 14.4 10.6" fill="none" stroke="#e9e9e9" stroke-width="2.3" stroke-linecap="round" stroke-linejoin="round" /><path d="M4.2 12.8 A4 4 0 0 1 11.8 12.8 Z" fill="#e9e9e9" /><path d="M5 8.2 L8 5.6 L11 8.2" fill="none" stroke="#333" stroke-width="1.2" stroke-linecap="round" stroke-linejoin="round" /></svg>
<svg class="a" style="left:368.3px;top:49.4px;" width="15.4" height="15.4" viewBox="0 0 16 16"><rect x="1.2" y="2" width="13.6" height="12" fill="#ececec" /><rect x="1.2" y="2" width="13.6" height="2.4" fill="#ececec" /><path d="M1.2 4.8 H14.8" fill="none" stroke="#333" stroke-width="0.7" stroke-linecap="round" stroke-linejoin="round" /><path d="M8 6.4 L11.6 7.8 V11.6 L8 13 L4.4 11.6 V7.8 Z" fill="#2e2e2e" /><path d="M4.4 7.8 L8 9.2 L11.6 7.8 M8 9.2 V13" fill="none" stroke="#e9e9e9" stroke-width="0.7" stroke-linecap="round" stroke-linejoin="round" /></svg>
<svg class="a" style="left:393px;top:49.4px;" width="15.4" height="15.4" viewBox="0 0 16 16"><rect x="1" y="5.4" width="8.6" height="7.4" fill="#8c8c8c" stroke="#b5b5b5" stroke-width="0.9" /><path d="M10.4 1.2 C7 1.2 6.2 5 8.6 7.6 C9 8.2 9 8.8 9 9.4 H11.8 C11.8 8.8 11.8 8.2 12.2 7.6 C14.6 5 13.8 1.2 10.4 1.2 Z" fill="#f3b42c" /><path d="M9.2 11 H11.6 M9.2 12.6 H11.6" fill="none" stroke="#e9e9e9" stroke-width="1" stroke-linecap="round" stroke-linejoin="round" /></svg>
<svg class="a" style="left:412.3px;top:49.4px;" width="15.4" height="15.4" viewBox="0 0 16 16"><rect x="1" y="5" width="7.4" height="7.6" fill="#8c8c8c" stroke="#a8a8a8" stroke-width="0.8" /><circle cx="8.4" cy="4" r="2" fill="#d9d9d9" /><circle cx="12.4" cy="4" r="2" fill="#d9d9d9" /><rect x="7" y="6.2" width="6.4" height="6.4" fill="#d9d9d9" /><path d="M13.4 9.4 L15.6 7.6 V12 Z" fill="#d9d9d9" /></svg>
<svg class="a" style="left:436.7px;top:49.4px;" width="15.4" height="15.4" viewBox="0 0 16 16"><circle cx="4.4" cy="4.2" r="2.6" fill="#ececec" /><circle cx="9.7" cy="4.2" r="2.6" fill="#ececec" /><circle cx="4.4" cy="4.2" r="1.2" fill="#333" /><circle cx="9.7" cy="4.2" r="1.2" fill="#333" /><rect x="1.8" y="6.2" width="10.2" height="6.8" fill="#ececec" rx="1" /><path d="M12 9.5 L15.2 7.2 V12.2 Z" fill="#e9e9e9" /></svg>
<svg class="a" style="left:461.7px;top:49.4px;" width="15.4" height="15.4" viewBox="0 0 16 16"><path d="M1.4 2.6 H14.6 L12.2 7.2 H3.8 Z" fill="#f3b42c" /><path d="M8 7.2 V13.8 M6 11.8 L8 14.2 L10 11.8" fill="none" stroke="#f3b42c" stroke-width="1.4" stroke-linecap="round" stroke-linejoin="round" /></svg>
<svg class="a" style="left:481.1px;top:49.4px;" width="15.4" height="15.4" viewBox="0 0 16 16"><path d="M1.4 11.8 C1.4 1.6 14.6 1.6 14.6 11.8 C11 13.4 5 13.4 1.4 11.8 Z" fill="#f3b42c" /><path d="M7.4 3.6 C6.6 6.8 6.8 9.6 7.2 12.6" fill="none" stroke="#333" stroke-width="0.8" stroke-linecap="round" stroke-linejoin="round" /></svg>
<svg class="a" style="left:501.1px;top:49.4px;" width="15.4" height="15.4" viewBox="0 0 16 16"><circle cx="8" cy="8" r="6.6" fill="#f3b42c" /><path d="M12 4.6 C12.2 8.4 9 11.2 5.4 11" fill="none" stroke="#333" stroke-width="0.9" stroke-linecap="round" stroke-linejoin="round" /></svg>
<svg class="a" style="left:521.1px;top:49.4px;" width="15.4" height="15.4" viewBox="0 0 16 16"><circle cx="8" cy="8" r="6.4" fill="none" stroke="#f3b42c" stroke-width="1.4" /><path d="M8 2.2 L12.6 10.6 H3.4 Z M8 13.6 L3.6 5.6 H12.4 Z M8 2.2 V5.6 M3.4 10.6 L5.6 9.4 M12.6 10.6 L10.4 9.4" fill="none" stroke="#f3b42c" stroke-width="1" stroke-linecap="round" stroke-linejoin="round" /></svg>
<svg class="a" style="left:540.1px;top:49.4px;" width="15.4" height="15.4" viewBox="0 0 16 16"><ellipse cx="8" cy="4.4" rx="6.8" ry="2.8" fill="#f3b42c" /><path d="M8 7 V13.4 M6.2 11.6 L8 13.8 L9.8 11.6" fill="none" stroke="#f3b42c" stroke-width="1.4" stroke-linecap="round" stroke-linejoin="round" /></svg>
<svg class="a" style="left:560.3px;top:49.4px;" width="15.4" height="15.4" viewBox="0 0 16 16"><path d="M5.4 4.8 C5.4 0.8 10.6 0.8 10.6 4.8 Z" fill="#f3b42c" /><path d="M7 5.6 C1 8.4 1.4 14.4 4.6 13.8 C7 13.2 7.6 9 8 5.8 C8.4 9 9 13.2 11.4 13.8 C14.6 14.4 15 8.4 9 5.6" fill="none" stroke="#f3b42c" stroke-width="1.3" stroke-linecap="round" stroke-linejoin="round" /></svg>
<svg class="a" style="left:579.8px;top:49.4px;" width="15.4" height="15.4" viewBox="0 0 16 16"><circle cx="8" cy="8" r="3.9" fill="#f3b42c" /><path d="M8 1.2 V2.8 M8 13.2 V14.8 M1.2 8 H2.8 M13.2 8 H14.8 M3.2 3.2 L4.3 4.3 M11.7 11.7 L12.8 12.8 M12.8 3.2 L11.7 4.3 M3.2 12.8 L4.3 11.7" fill="none" stroke="#f3b42c" stroke-width="1.5" stroke-linecap="round" stroke-linejoin="round" /></svg>
<svg class="a" style="left:598.8px;top:49.4px;" width="15.4" height="15.4" viewBox="0 0 16 16"><path d="M11.0 8.0 L14.6 8.0 M10.6 9.5 L13.7 11.3 M9.5 10.6 L11.3 13.7 M8.0 11.0 L8.0 14.6 M6.5 10.6 L4.7 13.7 M5.4 9.5 L2.3 11.3 M5.0 8.0 L1.4 8.0 M5.4 6.5 L2.3 4.7 M6.5 5.4 L4.7 2.3 M8.0 5.0 L8.0 1.4 M9.5 5.4 L11.3 2.3 M10.6 6.5 L13.7 4.7" fill="none" stroke="#dcc44e" stroke-width="1.1" stroke-linecap="round" stroke-linejoin="round" /></svg>
<svg class="a" style="left:624.1px;top:49.4px;" width="15.4" height="15.4" viewBox="0 0 16 16"><path d="M1.4 4.4 L9 1.6 L14.6 3.8 V11.4 L8 14.6 L1.4 11.6 Z" fill="#d9d9d9" stroke="#e9e9e9" stroke-width="0.9" stroke-linecap="round" stroke-linejoin="round" /><path d="M1.4 4.4 L8 6.6 L14.6 3.8 M8 6.6 V14.6 M1.4 4.4 L8 14.6 M8 6.6 L14.6 11.4" fill="none" stroke="#333" stroke-width="0.8" stroke-linecap="round" stroke-linejoin="round" /></svg>
<svg class="a" style="left:643.8px;top:49.4px;" width="15.4" height="15.4" viewBox="0 0 16 16"><circle cx="8.4" cy="8.6" r="6.2" fill="#e3e3e3" /><path d="M4.6 9.4 C6 10.4 11 8.4 12.6 4.6" fill="none" stroke="#333" stroke-width="1" stroke-linecap="round" stroke-linejoin="round" /><ellipse cx="8.8" cy="5" rx="4.4" ry="2" fill="#48c3d8" transform="rotate(-35 8.8 5)"/><path d="M2.4 5.4 A6.6 6.6 0 0 1 6.6 1.8" fill="none" stroke="#2fb8a3" stroke-width="1" stroke-linecap="round" stroke-linejoin="round" stroke-dasharray="1.2 1"/></svg>
<svg class="a" style="left:663.3px;top:49.4px;" width="15.4" height="15.4" viewBox="0 0 16 16"><path d="M8 4.6 L1.6 14 H14.4 Z M8 4.6 L4.6 10.6 L8 9 L11.4 10.6 Z M1.6 14 L8 9 L14.4 14" fill="none" stroke="#e9e9e9" stroke-width="1.1" stroke-linecap="round" stroke-linejoin="round" /><path d="M8 4.4 V1.4 M6.8 2.6 L8 1.2 L9.2 2.6" fill="none" stroke="#e9e9e9" stroke-width="1" stroke-linecap="round" stroke-linejoin="round" /></svg>
<svg class="a" style="left:682.6px;top:49.4px;" width="15.4" height="15.4" viewBox="0 0 16 16"><rect x="2.4" y="1.6" width="4.6" height="13" fill="#2fb8a3" /><rect x="9" y="1.6" width="4.6" height="13" fill="#2fb8a3" /><path d="M2.4 4.8 h4.6 m2 0 h4.6 M2.4 8 h4.6 m2 0 h4.6 M2.4 11.2 h4.6 m2 0 h4.6" fill="none" stroke="#e9e9e9" stroke-width="1.3" stroke-linecap="round" stroke-linejoin="round" /><path d="M7 3 L9 4.4 M7 6.4 L9 7.8 M7 9.8 L9 11.2" fill="none" stroke="#e9e9e9" stroke-width="1" stroke-linecap="round" stroke-linejoin="round" /></svg>
<svg class="a" style="left:702.3px;top:49.4px;" width="15.4" height="15.4" viewBox="0 0 16 16"><path d="M8 14 L8 2.4 M8 14 L4.6 3.6 M8 14 L11.4 3.6 M7.2 14 L1.8 6 M8.8 14 L14.2 6 M6.6 14 L1.2 10 M9.4 14 L14.8 10" fill="none" stroke="#e9e9e9" stroke-width="1.5" stroke-linecap="round" stroke-linejoin="round" /></svg>
<svg class="a" style="left:721.9px;top:49.4px;" width="15.4" height="15.4" viewBox="0 0 16 16"><path d="M2.4 3.6 L10.8 1.2 L14.4 3.2 V10.6 L6.2 14.8 L2.4 12.6 Z" fill="#2fb8a3" /><path d="M4 5 h1.4 m1.4 0 h1.4 M4 7.4 h1.4 M4 9.8 h1.4 M4 12 h1.4 M11.6 3.8 v1.4 M13 3.2 v1.4" fill="none" stroke="#e9e9e9" stroke-width="1.1" stroke-linecap="round" stroke-linejoin="round" /><path d="M9.2 4.4 C12 6.6 12.4 9 11.6 10.6 C10.8 12.4 7.8 12.4 7 10.6 C6.4 9 7.4 7.8 8 7 C8.2 8 8.6 8.4 9.2 8.2 C9.8 7.4 9.8 5.8 9.2 4.4 Z" fill="#f2f2f2" /><circle cx="9.2" cy="10.2" r="1.1" fill="#333" /></svg>
<svg class="a" style="left:746.9px;top:49.4px;" width="15.4" height="15.4" viewBox="0 0 16 16"><defs><radialGradient id="sg" cx="38%" cy="32%" r="70%"><stop offset="0" stop-color="#d2d2d2"/><stop offset="1" stop-color="#7a7a7a"/></radialGradient></defs><circle cx="7" cy="8" r="6.4" fill="url(#sg)" /><path d="M13.5 16 L16 16 L16 13.5 Z" fill="#e9e9e9" /></svg>
<svg class="a" style="left:766.3px;top:49.4px;" width="15.4" height="15.4" viewBox="0 0 16 16"><circle cx="4.6" cy="4.4" r="3.1" fill="#48c3d8" /><circle cx="11.6" cy="4.4" r="3.1" fill="#dcdcdc" /><circle cx="4.6" cy="11.6" r="3.1" fill="#dcdcdc" /><circle cx="11.6" cy="11.6" r="3.1" fill="#f3b42c" /></svg>
<svg class="a" style="left:786.1px;top:49.4px;" width="15.4" height="15.4" viewBox="0 0 16 16"><path d="M8 1.4 C3.5 1.4 1 4.8 1.2 8.2 C1.4 12 4.4 14.6 7.4 14.6 C9.4 14.6 9.4 12.8 8.8 12 C8.2 11 9 10.2 10.2 10.4 C13 10.8 14.8 9.6 14.8 7.2 C14.8 4 12 1.4 8 1.4 Z" fill="#ececec" /><circle cx="5.6" cy="8.6" r="2.2" fill="#2e2e2e" /><circle cx="5.6" cy="8.6" r="0.9" fill="#ececec" /><circle cx="8.6" cy="4.2" r="1.1" fill="#2e2e2e" /><circle cx="11.8" cy="5.6" r="0.9" fill="#2e2e2e" /></svg>
<svg class="a" style="left:805.8px;top:49.4px;" width="15.4" height="15.4" viewBox="0 0 16 16"><circle cx="6" cy="5.4" r="4.6" fill="#dcdcdc" /><path d="M1.8 6.6 C5 7.6 8.6 6.2 10.2 3.6" fill="none" stroke="#333" stroke-width="1" stroke-linecap="round" stroke-linejoin="round" /><rect x="6" y="7.4" width="8.6" height="7" fill="#444" stroke="#2fb8a3" stroke-width="1.5" /><path d="M8.4 12.2 H12.4" fill="none" stroke="#e9e9e9" stroke-width="1.5" stroke-linecap="round" stroke-linejoin="round" /></svg>
<svg class="a" style="left:830px;top:49.4px;" width="15.4" height="15.4" viewBox="0 0 16 16"><rect x="1.2" y="1.6" width="6.6" height="11.6" fill="#48c3d8" stroke="#b5b5b5" stroke-width="0.9" /><path d="M2 4 H7 M2 11 H7" fill="none" stroke="#333" stroke-width="0.7" stroke-linecap="round" stroke-linejoin="round" /><rect x="9.6" y="6.6" width="5.4" height="7.4" fill="#2fb8a3" stroke="#b5b5b5" stroke-width="0.9" /><path d="M7.8 9.6 H9.6" fill="none" stroke="#e9e9e9" stroke-width="1.4" stroke-linecap="round" stroke-linejoin="round" /></svg>
<svg class="a" style="left:849.7px;top:49.4px;" width="15.4" height="15.4" viewBox="0 0 16 16"><circle cx="8" cy="8" r="6.8" fill="#f2f2f2" /><path d="M4.2 5.4 L7.6 12 L12 3.6" fill="none" stroke="#333" stroke-width="2" stroke-linecap="round" stroke-linejoin="round" /></svg>
<svg class="a" style="left:875.3px;top:49.4px;" width="15.4" height="15.4" viewBox="0 0 16 16"><g transform="translate(-0.6,3.2) scale(0.58)"><path d="M6 1.5 l-3 4 h1.3 l-2.3 3.2 h1.4 l-2.4 3.5 h4.3 v2 h1.4 v-2 h4.3 l-2.4 -3.5 h1.4 l-2.3 -3.2 h1.3 Z" fill="#48c3d8" /></g><g transform="translate(8.2,0) scale(0.56)"><path d="M7 1.5 l-3 4 h1.3 l-2.3 3.2 h1.4 l-2.4 3.5 h4.3 v2 h1.4 v-2 h4.3 l-2.4 -3.5 h1.4 l-2.3 -3.2 h1.3 Z" fill="#f3b42c" /></g><g transform="translate(3.4,3.6) scale(0.74)"><path d="M7 1.5 l-3 4 h1.3 l-2.3 3.2 h1.4 l-2.4 3.5 h4.3 v2 h1.4 v-2 h4.3 l-2.4 -3.5 h1.4 l-2.3 -3.2 h1.3 Z" fill="#ececec" /></g></svg>
<svg class="a" style="left:895.3px;top:49.4px;" width="15.4" height="15.4" viewBox="0 0 16 16"><rect x="1.4" y="1.4" width="13.2" height="13.2" fill="none" stroke="#e3e3e3" stroke-width="1.5" rx="2" /><path d="M3.6 5 H12.4 M3.6 8 H12.4 M3.6 11 H12.4" fill="none" stroke="#f3b42c" stroke-width="1.5" stroke-linecap="round" stroke-linejoin="round" stroke-linecap="butt"/></svg>
<svg class="a" style="left:914.8px;top:49.4px;" width="15.4" height="15.4" viewBox="0 0 16 16"><circle cx="8" cy="8" r="6.7" fill="none" stroke="#e3e3e3" stroke-width="1.2" /><text x="8" y="12" font-family="Liberation Sans,sans-serif" font-size="11" fill="#2fb8a3" text-anchor="middle" font-weight="bold">?</text></svg>
<div class="a" style="left:323.45px;top:52px;width:0.9px;height:11px;background:#2c2c2c;"></div>
<div class="a" style="left:387.55px;top:52px;width:0.9px;height:11px;background:#2c2c2c;"></div>
<div class="a" style="left:432.35px;top:52px;width:0.9px;height:11px;background:#2c2c2c;"></div>
<div class="a" style="left:456.95px;top:52px;width:0.9px;height:11px;background:#2c2c2c;"></div>
<div class="a" style="left:618.55px;top:52px;width:0.9px;height:11px;background:#2c2c2c;"></div>
<div class="a" style="left:741.55px;top:52px;width:0.9px;height:11px;background:#2c2c2c;"></div>
<div class="a" style="left:825.45px;top:52px;width:0.9px;height:11px;background:#2c2c2c;"></div>
<div class="a" style="left:869.55px;top:52px;width:0.9px;height:11px;background:#2c2c2c;"></div>
<div class="a" style="left:1.5px;top:68.4px;width:1178.5px;height:12.2px;background:#4c4c4c;"></div>
<div class="a" style="left:9.3px;top:69.4px;width:49.2px;height:11.2px;background:linear-gradient(#6e6e6e,#555555);border-radius:1.5px;"></div>
<div class="a t" style="top:70.2px;font-size:7.5px;line-height:10px;color:#f0f0f0;left:22.08px;">Modeling</div>
<div class="a t" style="top:70.2px;font-size:7.4px;line-height:10px;color:#9c9c9c;left:72.7px;letter-spacing:-0.089px;">Freeform</div>
<div class="a t" style="top:70.2px;font-size:7.4px;line-height:10px;color:#9c9c9c;left:129px;letter-spacing:-0.105px;">Selection</div>
<div class="a t" style="top:70.2px;font-size:7.4px;line-height:10px;color:#9c9c9c;left:185.8px;letter-spacing:-0.059px;">Object Paint</div>
<div class="a t" style="top:70.2px;font-size:7.4px;line-height:10px;color:#9c9c9c;left:252.5px;letter-spacing:-0.039px;">Populate</div>
<svg class="a" style="left:301px;top:72.8px;" width="16" height="5" viewBox="0 0 16 5"><rect x="0" y="0" width="7.6" height="4.6" fill="#f0f0f0" rx="1.6" /><rect x="2.6" y="1.5" width="2.4" height="1.6" fill="#333" /><path d="M10.6 1.4 H14.2 L12.4 3.6 Z" fill="#e0e0e0" /></svg>
<div class="a" style="left:1.5px;top:80.6px;width:1178.5px;height:12px;background:#444444;"></div>
<div class="a" style="left:7.5px;top:81.2px;width:400.5px;height:10.8px;background:#484848;box-shadow:inset 0 0 0 1px #3a3a3a;"></div>
<div class="a t" style="top:81.5px;font-size:7.4px;line-height:10px;color:#f0f0f0;left:10.5px;letter-spacing:0.092px;">Polygon Modeling</div>
<div class="a t" style="top:81.5px;font-size:7.4px;line-height:10px;color:#f0f0f0;left:77.6px;letter-spacing:0.000px;">Modify Selection</div>
<div class="a t" style="top:81.5px;font-size:7.4px;line-height:10px;color:#f0f0f0;left:139px;letter-spacing:-0.238px;">Edit</div>
<div class="a t" style="top:81.5px;font-size:7.4px;line-height:10px;color:#f0f0f0;left:158.2px;letter-spacing:-0.014px;">Geometry (All)</div>
<div class="a t" style="top:81.5px;font-size:7.4px;line-height:10px;color:#f0f0f0;left:211.5px;letter-spacing:-0.178px;">Vertices</div>
<div class="a t" style="top:81.5px;font-size:7.4px;line-height:10px;color:#f0f0f0;left:243.6px;letter-spacing:-0.152px;">Loops</div>
<div class="a t" style="top:81.5px;font-size:7.4px;line-height:10px;color:#f0f0f0;left:269.8px;letter-spacing:-0.059px;">Subdivision</div>
<div class="a t" style="top:81.5px;font-size:7.4px;line-height:10px;color:#f0f0f0;left:313.9px;letter-spacing:0.021px;">Visibility</div>
<div class="a t" style="top:81.5px;font-size:7.4px;line-height:10px;color:#f0f0f0;left:347.8px;letter-spacing:0.089px;">Align</div>
<div class="a t" style="top:81.5px;font-size:7.4px;line-height:10px;color:#f0f0f0;left:371.5px;letter-spacing:-0.073px;">Properties</div>
<div class="a" style="left:73.7px;top:81.8px;width:1px;height:9.8px;background:#333;"></div>
<div class="a" style="left:134.9px;top:81.8px;width:1px;height:9.8px;background:#333;"></div>
<div class="a" style="left:154.1px;top:81.8px;width:1px;height:9.8px;background:#333;"></div>
<div class="a" style="left:208.1px;top:81.8px;width:1px;height:9.8px;background:#333;"></div>
<div class="a" style="left:239.5px;top:81.8px;width:1px;height:9.8px;background:#333;"></div>
<div class="a" style="left:265.9px;top:81.8px;width:1px;height:9.8px;background:#333;"></div>
<div class="a" style="left:309.9px;top:81.8px;width:1px;height:9.8px;background:#333;"></div>
<div class="a" style="left:343.7px;top:81.8px;width:1px;height:9.8px;background:#333;"></div>
<div class="a" style="left:367.7px;top:81.8px;width:1px;height:9.8px;background:#333;"></div>
<div class="a" style="left:1.5px;top:91.8px;width:1178.5px;height:1.2px;background:#383838;"></div>
<div class="a" style="left:1.5px;top:96.2px;width:24.1px;height:468.8px;background:#444;"></div>
<div class="a" style="left:2px;top:99.6px;width:22.2px;height:435.4px;background:#333333;"></div>
<div class="a" style="left:2px;top:97.4px;width:22px;height:1px;background:#5a5a5a;"></div>
<div class="a" style="left:7.6px;top:517px;width:10.2px;height:11.6px;background:#5a5a5a;border-radius:1px;"></div>
<svg class="a" style="left:10.6px;top:520px;" width="5" height="6" viewBox="0 0 5 6"><path d="M0.6 0.4 L4.4 2.8 L0.6 5.2 Z" fill="#f0f0f0" /></svg>
<div class="a" style="left:3.4px;top:535.4px;width:21.6px;height:27px;background:#5b8fd2;border-radius:1.5px;"></div>
<div class="a" style="left:4.6px;top:536.6px;width:19.2px;height:22px;background:#4a4d58;border-radius:1px;"></div>
<div class="a" style="left:6.2px;top:538.4px;width:16px;height:18.2px;background:#565963;"></div>
<div class="a" style="left:25.6px;top:96.2px;width:184.4px;height:468.8px;background:#444444;"></div>
<div class="a" style="left:28px;top:97.4px;width:180px;height:1px;background:#5a5a5a;"></div>
<div class="a t" style="top:103.6px;font-size:7.4px;line-height:10px;color:#ececec;left:36.7px;">Select</div>
<div class="a t" style="top:103.6px;font-size:7.4px;line-height:10px;color:#ececec;left:67.4px;">Display</div>
<div class="a t" style="top:103.6px;font-size:7.4px;line-height:10px;color:#ececec;left:102.5px;">Edit</div>
<div class="a t" style="top:103.6px;font-size:7.4px;line-height:10px;color:#ececec;left:126.7px;">Customize</div>
<div class="a" style="left:30px;top:117.6px;width:92px;height:13px;background:#484848;box-shadow:inset 0 0 0 1px #5c5c5c;"></div>
<svg class="a" style="left:126.4px;top:121.4px;" width="6" height="6" viewBox="0 0 6 6"><path d="M0.5 0.5 L5.5 5.5 M5.5 0.5 L0.5 5.5" fill="none" stroke="#9a9a9a" stroke-width="0.9" stroke-linecap="round" stroke-linejoin="round" /></svg>
<div class="a" style="left:138px;top:117.2px;width:15.2px;height:14px;background:#5b8fd2;border-radius:1px;"></div>
<svg class="a" style="left:140.6px;top:119.4px;" width="10" height="10" viewBox="0 0 10 10"><path d="M0.6 0.8 H9.4 L6 5 V9.2 L4 8 V5 Z" fill="#f2f2f2" /><circle cx="7.6" cy="7.6" r="1.7" fill="#2fb8a3" /></svg>
<div class="a" style="left:155.7px;top:119px;width:1px;height:11px;background:#2e2e2e;"></div>
<svg class="a" style="left:160.4px;top:119.6px;" width="7" height="9" viewBox="0 0 7 9"><path d="M1.6 4 V2.6 A1.9 1.9 0 0 1 5.4 2.6 V4" fill="none" stroke="#f0f0f0" stroke-width="1.1" stroke-linecap="round" stroke-linejoin="round" /><rect x="0.6" y="3.8" width="5.8" height="4.8" fill="#f0f0f0" rx="0.6" /><rect x="3" y="5.2" width="1" height="1.8" fill="#333" /></svg>
<svg class="a" style="left:173.4px;top:119.6px;" width="10" height="9" viewBox="0 0 10 9"><rect x="0.4" y="0.4" width="6.6" height="2.4" fill="#2fb8a3" /><path d="M2 2.8 V7.2 H4 M2 5 H4" fill="none" stroke="#e6e6e6" stroke-width="0.8" stroke-linecap="round" stroke-linejoin="round" /><rect x="4.4" y="4" width="2.2" height="1.8" fill="#e6e6e6" /><rect x="4.4" y="6.6" width="2.2" height="1.8" fill="#e6e6e6" /><rect x="7.4" y="4.2" width="1.6" height="1.4" fill="#2fb8a3" /><rect x="7.4" y="6.8" width="1.6" height="1.4" fill="#2fb8a3" /></svg>
<svg class="a" style="left:188px;top:119.6px;" width="10" height="9" viewBox="0 0 10 9"><rect x="0.4" y="0.4" width="6.6" height="2.4" fill="#2fb8a3" /><path d="M2 2.8 V7.2 H4 M2 5 H4" fill="none" stroke="#e6e6e6" stroke-width="0.8" stroke-linecap="round" stroke-linejoin="round" /><rect x="4.4" y="4" width="2.2" height="1.8" fill="#e6e6e6" /><rect x="4.4" y="6.6" width="2.2" height="1.8" fill="#e6e6e6" /><rect x="7.4" y="4.2" width="1.6" height="1.4" fill="#2fb8a3" /><rect x="7.4" y="6.8" width="1.6" height="1.4" fill="#2fb8a3" /></svg>
<div class="a" style="left:43px;top:135px;width:164.6px;height:9.6px;background:#4a4a4a;box-shadow:inset 0 0 0 1px #3a3a3a;"></div>
<div class="a t" style="top:134.8px;font-size:7.1px;line-height:10px;color:#f0f0f0;left:44.8px;letter-spacing:-0.300px;">Name (Sorted Ascending)</div>
<svg class="a" style="left:161.6px;top:137.6px;" width="5" height="4.4" viewBox="0 0 5 4.4"><path d="M2.5 0 L5 4.4 H0 Z" fill="#f0f0f0" /></svg>
<div class="a" style="left:167.9px;top:135.4px;width:1px;height:8.8px;background:#333;"></div>
<div class="a t" style="top:134.8px;font-size:7.1px;line-height:10px;color:#f0f0f0;left:170.4px;">Frozen</div>
<div class="a" style="left:74.4px;top:146.8px;width:133.2px;height:10.4px;background:#484848;"></div>
<div class="a" style="left:74.4px;top:157.6px;width:133.2px;height:10.8px;background:#6a6a6a;"></div>
<div class="a" style="left:167.9px;top:146.8px;width:1px;height:21.6px;background:#333;"></div>
<div class="a" style="left:168px;top:146.8px;width:0.8px;height:21.6px;background:#444;"></div>
<svg class="a" style="left:55px;top:148.8px;" width="8" height="5.6" viewBox="0 0 8 5.6"><path d="M0.3 2.8 C2 0.2 6 0.2 7.7 2.8 C6 5.4 2 5.4 0.3 2.8 Z" fill="#f2f2f2" /><circle cx="4" cy="2.8" r="1.5" fill="#333" /><circle cx="4" cy="2.8" r="0.6" fill="#f2f2f2" /></svg>
<svg class="a" style="left:65px;top:148.6px;" width="6" height="6" viewBox="0 0 6 6"><circle cx="3" cy="3" r="2.8" fill="#ececec" /></svg>
<svg class="a" style="left:55px;top:160px;" width="8" height="5.6" viewBox="0 0 8 5.6"><path d="M0.3 2.8 C2 0.2 6 0.2 7.7 2.8 C6 5.4 2 5.4 0.3 2.8 Z" fill="#f2f2f2" /><circle cx="4" cy="2.8" r="1.5" fill="#333" /><circle cx="4" cy="2.8" r="0.6" fill="#f2f2f2" /></svg>
<svg class="a" style="left:65px;top:159.8px;" width="6" height="6" viewBox="0 0 6 6"><circle cx="3" cy="3" r="2.8" fill="#ececec" /></svg>
<div class="a t" style="top:147.4px;font-size:7px;line-height:9px;color:#f0f0f0;left:75.8px;letter-spacing:-0.227px;">Block:54уибен</div>
<div class="a t" style="top:158.7px;font-size:7px;line-height:9px;color:#f4f4f4;left:75.8px;letter-spacing:-0.188px;">Line005</div>
<svg class="a" style="left:185px;top:148.6px;" width="6" height="6.4" viewBox="0 0 6 6.4"><path d="M3 0.2 V6.2 M0.6 1.6 L5.4 4.8 M5.4 1.6 L0.6 4.8 M0.2 3.2 H5.8" fill="none" stroke="#6a6a6a" stroke-width="0.6" stroke-linecap="round" stroke-linejoin="round" /></svg>
<svg class="a" style="left:185px;top:159.8px;" width="6" height="6.4" viewBox="0 0 6 6.4"><path d="M3 0.2 V6.2 M0.6 1.6 L5.4 4.8 M5.4 1.6 L0.6 4.8 M0.2 3.2 H5.8" fill="none" stroke="#3c3c3c" stroke-width="0.6" stroke-linecap="round" stroke-linejoin="round" /></svg>
<div class="a" style="left:28px;top:135px;width:13.6px;height:12.6px;background:#598bcc;"></div>
<svg class="a" style="left:28.6px;top:135.1px;" width="12.4" height="12.4" viewBox="0 0 12.4 12.4"><circle cx="6.2" cy="6.2" r="3" fill="#f4eef2" stroke="#33425c" stroke-width="0.8" /></svg>
<div class="a" style="left:28px;top:149.1px;width:13.6px;height:12.6px;background:#598bcc;"></div>
<svg class="a" style="left:28.6px;top:149.2px;" width="12.4" height="12.4" viewBox="0 0 12.4 12.4"><circle cx="5.2" cy="5" r="3" fill="#f2f2f2" stroke="#33425c" stroke-width="0.8" /><circle cx="5.2" cy="5" r="1.3" fill="#33425c" /><rect x="6.4" y="6.4" width="4" height="4" fill="#f2f2f2" stroke="#33425c" stroke-width="0.7" /></svg>
<div class="a" style="left:28px;top:163.2px;width:13.6px;height:12.6px;background:#598bcc;"></div>
<svg class="a" style="left:28.6px;top:163.3px;" width="12.4" height="12.4" viewBox="0 0 12.4 12.4"><path d="M6.2 1.4 C3.2 1.4 2.6 4.8 4.6 6.8 V8.2 H7.8 V6.8 C9.8 4.8 9.2 1.4 6.2 1.4 Z" fill="#f2f2f2" stroke="#33425c" stroke-width="0.7" stroke-linecap="round" stroke-linejoin="round" /><path d="M5 9.8 H7.4" fill="none" stroke="#f2f2f2" stroke-width="0.9" stroke-linecap="round" stroke-linejoin="round" /></svg>
<div class="a" style="left:28px;top:177.3px;width:13.6px;height:12.6px;background:#598bcc;"></div>
<svg class="a" style="left:28.6px;top:177.4px;" width="12.4" height="12.4" viewBox="0 0 12.4 12.4"><rect x="1.8" y="3.2" width="6.4" height="6" fill="#f2f2f2" stroke="#33425c" stroke-width="0.7" rx="0.6" /><path d="M8.4 6.2 L10.8 4 V8.4 Z" fill="#f2f2f2" stroke="#33425c" stroke-width="0.6" stroke-linecap="round" stroke-linejoin="round" /></svg>
<div class="a" style="left:28px;top:191.4px;width:13.6px;height:12.6px;background:#598bcc;"></div>
<svg class="a" style="left:28.6px;top:191.5px;" width="12.4" height="12.4" viewBox="0 0 12.4 12.4"><path d="M2.4 1.6 V10.4 H10.8 Z" fill="#f2f2f2" stroke="#33425c" stroke-width="0.8" stroke-linecap="round" stroke-linejoin="round" /><path d="M4.2 6 V8.8 H6.8 Z" fill="#5b8fd2" stroke="#33425c" stroke-width="0.5" stroke-linecap="round" stroke-linejoin="round" /></svg>
<div class="a" style="left:28px;top:205.5px;width:13.6px;height:12.6px;background:#598bcc;"></div>
<svg class="a" style="left:28.6px;top:205.6px;" width="12.4" height="12.4" viewBox="0 0 12.4 12.4"><path d="M2 3.6 q1.4-1.4 2.8 0 t2.8 0 t2.8 0 M2 6.2 q1.4-1.4 2.8 0 t2.8 0 t2.8 0 M2 8.8 q1.4-1.4 2.8 0 t2.8 0 t2.8 0" fill="none" stroke="#c4d2e8" stroke-width="1" stroke-linecap="round" stroke-linejoin="round" /></svg>
<div class="a" style="left:28px;top:219.6px;width:13.6px;height:12.6px;background:#598bcc;"></div>
<svg class="a" style="left:28.6px;top:219.7px;" width="12.4" height="12.4" viewBox="0 0 12.4 12.4"><rect x="2" y="2" width="8.4" height="8.4" fill="#2d5c54" stroke="#33425c" stroke-width="0.6" /><circle cx="5" cy="5" r="2.1" fill="#f2f2f2" /><circle cx="8" cy="8" r="1.7" fill="#f2f2f2" /></svg>
<div class="a" style="left:28px;top:233.7px;width:13.6px;height:12.6px;background:#598bcc;"></div>
<svg class="a" style="left:28.6px;top:233.8px;" width="12.4" height="12.4" viewBox="0 0 12.4 12.4"><circle cx="6.2" cy="6.4" r="4.2" fill="#f2f2f2" stroke="#33425c" stroke-width="0.7" /><circle cx="6.2" cy="6.4" r="2.2" fill="#5b8fd2" stroke="#33425c" stroke-width="0.5" /><rect x="5.2" y="6.4" width="2" height="4.4" fill="#2d8c7c" /></svg>
<div class="a" style="left:28px;top:247.8px;width:13.6px;height:12.6px;background:#598bcc;"></div>
<svg class="a" style="left:28.6px;top:247.9px;" width="12.4" height="12.4" viewBox="0 0 12.4 12.4"><path d="M3 2.6 L9.6 9.8" fill="none" stroke="#33425c" stroke-width="3" stroke-linecap="round" stroke-linejoin="round" /><path d="M3 2.6 L9.6 9.8" fill="none" stroke="#f2f2f2" stroke-width="1.8" stroke-linecap="round" stroke-linejoin="round" /><path d="M2 1.6 L4.6 2.4 L2.8 4.2 Z" fill="#f2f2f2" /></svg>
<div class="a" style="left:28px;top:261.9px;width:13.6px;height:12.6px;background:#598bcc;"></div>
<svg class="a" style="left:28.6px;top:262px;" width="12.4" height="12.4" viewBox="0 0 12.4 12.4"><rect x="2" y="3" width="8.4" height="6.6" fill="#f2f2f2" stroke="#33425c" stroke-width="0.7" rx="0.6" /><rect x="3.2" y="5.4" width="6" height="1.8" fill="#333" /></svg>
<div class="a" style="left:28px;top:276px;width:13.6px;height:12.6px;background:#598bcc;"></div>
<svg class="a" style="left:28.6px;top:276.1px;" width="12.4" height="12.4" viewBox="0 0 12.4 12.4"><circle cx="6.2" cy="6.2" r="4" fill="#5b8fd2" stroke="#f2f2f2" stroke-width="1" /><path d="M6.2 3 V9.4 M3 6.2 H9.4 M4 4 L8.4 8.4 M8.4 4 L4 8.4" fill="none" stroke="#f2f2f2" stroke-width="0.7" stroke-linecap="round" stroke-linejoin="round" /></svg>
<div class="a" style="left:28px;top:290.1px;width:13.6px;height:12.6px;background:#598bcc;"></div>
<svg class="a" style="left:28.6px;top:290.2px;" width="12.4" height="12.4" viewBox="0 0 12.4 12.4"><path d="M1.6 6.2 C3.4 3 9 3 10.8 6.2 C9 9.4 3.4 9.4 1.6 6.2 Z" fill="#f2f2f2" stroke="#33425c" stroke-width="0.6" stroke-linecap="round" stroke-linejoin="round" /><circle cx="6.2" cy="6.2" r="1.6" fill="#333" /></svg>
<div class="a" style="left:29.6px;top:306.4px;width:10.4px;height:0.8px;background:#5c5c5c;"></div>
<div class="a" style="left:29.6px;top:352px;width:10.4px;height:0.8px;background:#5c5c5c;"></div>
<svg class="a" style="left:30.6px;top:310px;" width="8" height="9" viewBox="0 0 8 9"><rect x="0.5" y="0.5" width="7" height="8" fill="#f0f0f0" /><path d="M2.6 3 H5.4 M2.6 4.6 H5.4 M2.6 6.2 H5.4" fill="none" stroke="#444" stroke-width="0.7" stroke-linecap="round" stroke-linejoin="round" /></svg>
<svg class="a" style="left:30.6px;top:324px;" width="8" height="9" viewBox="0 0 8 9"><rect x="0.5" y="0.5" width="7" height="8" fill="#e6e6e6" /></svg>
<svg class="a" style="left:30.6px;top:338px;" width="8" height="9" viewBox="0 0 8 9"><rect x="0.5" y="0.5" width="7" height="8" fill="none" stroke="#e6e6e6" stroke-width="0.9" /><path d="M3 6.6 V2.6 H5.4 M3 4.4 H4.8" fill="none" stroke="#e6e6e6" stroke-width="0.7" stroke-linecap="round" stroke-linejoin="round" /></svg>
<svg class="a" style="left:30.2px;top:355.4px;" width="9" height="9" viewBox="0 0 9 9"><path d="M0.4 0.6 H8 L5.2 4.2 V8 L3.4 7 V4.2 Z" fill="#9a9a9a" /><circle cx="6.6" cy="6.8" r="1.4" fill="none" stroke="#9a9a9a" stroke-width="0.8" /></svg>
<svg class="a" style="left:30.4px;top:369.4px;" width="9" height="9" viewBox="0 0 9 9"><path d="M0.4 0.6 H8 L5.2 4.2 V8.4 L3.4 7.2 V4.2 Z" fill="#f0f0f0" /></svg>
<svg class="a" style="left:30.2px;top:384.6px;" width="9" height="8" viewBox="0 0 9 8"><path d="M0.6 1.8 H2.6 V0.6 H5.6 V1.8 H7.8 V7.2 H0.6 Z" fill="none" stroke="#e0e0e0" stroke-width="0.9" stroke-linecap="round" stroke-linejoin="round" /></svg>
<div class="a" style="left:30px;top:547.6px;width:89px;height:14.4px;background:#484848;box-shadow:inset 0 0 0 1px #5e5e5e;"></div>
<div class="a t" style="top:549.8px;font-size:7.6px;line-height:10px;color:#d9d93c;left:32px;">Default</div>
<svg class="a" style="left:122.4px;top:553.8px;" width="4" height="3" viewBox="0 0 4 3"><path d="M0 0 H4 L2 2.6 Z" fill="#111" /></svg>
<div class="a" style="left:129.5px;top:548.6px;width:1px;height:12.6px;background:#2e2e2e;"></div>
<svg class="a" style="left:134.2px;top:549.6px;" width="9" height="10" viewBox="0 0 9 10"><path d="M4.5 0.6 L8.4 2.4 L4.5 4.2 L0.6 2.4 Z" fill="#f0f0f0" /><path d="M0.6 4.4 L4.5 6.2 L8.4 4.4 M0.6 6.6 L4.5 8.4 L8.4 6.6" fill="none" stroke="#f0f0f0" stroke-width="1.1" stroke-linecap="round" stroke-linejoin="round" /></svg>
<div class="a" style="left:146.2px;top:547.8px;width:14.8px;height:14.2px;background:#5b8fd2;border-radius:1px;"></div>
<svg class="a" style="left:148.6px;top:549.8px;" width="10" height="10" viewBox="0 0 10 10"><rect x="1" y="0.6" width="8" height="3" fill="#f4f4f4" /><path d="M5 3.6 V5.6 M1.8 8 V5.6 H8.2 V8" fill="none" stroke="#f4f4f4" stroke-width="0.9" stroke-linecap="round" stroke-linejoin="round" /><rect x="0.6" y="7.4" width="2.6" height="2.2" fill="#f4f4f4" /><rect x="6.8" y="7.4" width="2.6" height="2.2" fill="#f4f4f4" /><rect x="3.8" y="7.4" width="2.4" height="2.2" fill="#f4f4f4" /></svg>
<div class="a" style="left:204px;top:549.6px;width:4.6px;height:0.8px;background:#56627a;"></div>
<svg class="a" style="left:211px;top:96px;overflow:hidden;" width="838.2" height="468" viewBox="0 0 838.2 468"><defs><linearGradient id="gj" gradientUnits="userSpaceOnUse" x1="650" y1="300" x2="700" y2="310"><stop offset="0" stop-color="#aea02c"/><stop offset="1" stop-color="#9b8f28"/></linearGradient><linearGradient id="gdk" gradientUnits="userSpaceOnUse" x1="330" y1="180" x2="270" y2="440"><stop offset="0" stop-color="#433c10"/><stop offset="0.55" stop-color="#473f11"/><stop offset="1" stop-color="#5c5419"/></linearGradient><linearGradient id="vbg" x1="0" y1="0" x2="0" y2="1"><stop offset="0" stop-color="#1c1c1c"/><stop offset="0.3" stop-color="#323232"/><stop offset="0.55" stop-color="#404040"/><stop offset="1" stop-color="#4d4d4d"/></linearGradient><clipPath id="vcl"><rect x="1.8" y="1.4" width="834.4" height="464.4"/></clipPath></defs><rect x="0" y="0" width="838.2" height="468" fill="url(#vbg)"/><g clip-path="url(#vcl)"><polygon points="1,145.2 44.8,135 65.6,158.7 15.6,169.8 1,154.2" fill="#b3a32f" /><polygon points="1,154.2 15.6,169.8 20,188 1,192" fill="#463f11" /><polygon points="15.6,169.8 65.6,158.7 69,176 20,188" fill="#9a8e28" /><polygon points="37.1,165.2 43.9,163.5 54.9,176.9 48.2,178.2" fill="#b3a32f" /><polygon points="38.6,170 48.2,178.2 40.6,181" fill="#463f11" /><polyline points="1,145.2 44.8,135 65.6,158.7 15.6,169.8 1,154.2" fill="none" stroke="#f0e8a2" stroke-width="1.1" stroke-linejoin="round" /><polyline points="15.6,169.8 19.4,185.5" fill="none" stroke="#f0e8a2" stroke-width="1.1" stroke-linejoin="round" /><polyline points="65.6,158.7 68.4,173" fill="none" stroke="#f0e8a2" stroke-width="1.1" stroke-linejoin="round" /><polyline points="37.1,165.2 48.2,178.2" fill="none" stroke="#f0e8a2" stroke-width="1.1" stroke-linejoin="round" /><polyline points="43.9,163.5 54.9,176.9" fill="none" stroke="#f0e8a2" stroke-width="1.1" stroke-linejoin="round" /><polyline points="37.1,165.2 40.2,181" fill="none" stroke="#f0e8a2" stroke-width="1.1" stroke-linejoin="round" /><polyline points="1,136.8 7.6,135.4" fill="none" stroke="#f0e8a2" stroke-width="0.8" stroke-linejoin="round" /><polygon points="1,189.3 132.1,157.6 133.7,160.4 1,192.6" fill="#b3a32f" /><polygon points="1,192.6 133.7,160.4 140.2,202 1,238" fill="#9a8e28" /><polyline points="1,189.3 132.1,157.6" fill="none" stroke="#f0e8a2" stroke-width="1.1" stroke-linejoin="round" /><polyline points="1,192.6 133.7,160.4" fill="none" stroke="#f0e8a2" stroke-width="1.1" stroke-linejoin="round" /><polyline points="132.1,157.6 133.7,160.4 139.7,198.6" fill="none" stroke="#f0e8a2" stroke-width="1.1" stroke-linejoin="round" /><polygon points="1,234.2 156.6,194.3 159.2,197.2 1,238" fill="#b3a32f" /><polygon points="1,238 159.2,197.2 189.2,403.5 118.5,431.1 89,444 70.2,420.1 1,305.2" fill="#9a8e28" /><polyline points="1,234.2 156.6,194.3" fill="none" stroke="#f0e8a2" stroke-width="1.1" stroke-linejoin="round" /><polyline points="1,238 159.2,197.2" fill="none" stroke="#f0e8a2" stroke-width="1.1" stroke-linejoin="round" /><polyline points="156.6,194.3 159.2,197.2 189.2,403.5 118.5,431.1" fill="none" stroke="#f0e8a2" stroke-width="1.1" stroke-linejoin="round" /><polygon points="1,305.2 70.2,420.1 61.7,426 1,324" fill="#aa9b2c" /><polygon points="1,324 61.7,426 10,444.5 1,411.6" fill="#463f11" /><polygon points="1,411.6 10,444.5 1,448" fill="#9a8e28" /><polyline points="1,305.2 70.2,420.1" fill="none" stroke="#f0e8a2" stroke-width="1.1" stroke-linejoin="round" /><polyline points="1,324 61.7,426" fill="none" stroke="#f0e8a2" stroke-width="1.1" stroke-linejoin="round" /><polyline points="1,411.6 10,443.5" fill="none" stroke="#f0e8a2" stroke-width="1.1" stroke-linejoin="round" /><polygon points="1,447 104.1,409.9 125.3,443.8 69.3,467 1,467" fill="#b3a32f" /><polygon points="125.3,443.8 130.4,467 69.3,467" fill="#a3962a" /><polyline points="1,447 104.1,409.9 125.3,443.8 69.3,466" fill="none" stroke="#f0e8a2" stroke-width="1.1" stroke-linejoin="round" /><polyline points="125.3,443.8 130.4,466" fill="none" stroke="#f0e8a2" stroke-width="1.1" stroke-linejoin="round" /><polygon points="185.1,133.7 193.2,134.3 203.4,143 191.2,143" fill="#b3a32f" /><polygon points="191.2,143.4 193.2,144.4 198.3,182 198.3,188.2" fill="#7d7322" /><polygon points="193.2,144.4 203.4,143 207.5,179 198.3,182" fill="#9a8e28" /><polyline points="185.1,133.7 191.2,143 203.4,143 193.2,134.3 185.1,133.7" fill="none" stroke="#f0e8a2" stroke-width="0.7" stroke-linejoin="round" /><polyline points="191.2,143.4 198.3,188.2" fill="none" stroke="#f0e8a2" stroke-width="0.8" stroke-linejoin="round" /><polyline points="193.2,144.4 198.3,182 207.5,179 203.4,143" fill="none" stroke="#f0e8a2" stroke-width="0.8" stroke-linejoin="round" /><polygon points="240.5,175.6 386.6,136.9 316.3,236.6" fill="#9a8e28" /><polygon points="227.9,175 390.7,134.3 386.6,136.9 240.5,176.2" fill="#b3a32f" /><polygon points="235.6,180.8 388,305.2 298.1,339.2 304.8,433 286,416 269.2,397 257,368 248.5,337.2" fill="url(#gdk)" /><polygon points="235.6,180.8 240.5,175.3 395.5,302.3 388,305.2" fill="#b3a32f" /><polygon points="227.9,175 235,180 248.5,337.2 243.6,329.8" fill="#9e9129" /><polyline points="227.9,175 390.7,134.3" fill="none" stroke="#f0e8a2" stroke-width="1.1" stroke-linejoin="round" /><polyline points="240.5,176.2 386.6,136.9" fill="none" stroke="#f0e8a2" stroke-width="1.1" stroke-linejoin="round" /><polyline points="240.5,175.3 395.5,302.3" fill="none" stroke="#f0e8a2" stroke-width="1.1" stroke-linejoin="round" /><polyline points="235.6,180.8 388,305.2" fill="none" stroke="#f0e8a2" stroke-width="1.1" stroke-linejoin="round" /><polyline points="227.9,175 243.6,329.8" fill="none" stroke="#f0e8a2" stroke-width="1.1" stroke-linejoin="round" /><polyline points="231.6,177.6 246,333.6" fill="none" stroke="#f0e8a2" stroke-width="0.7" stroke-linejoin="round" /><polyline points="235,180 248.5,337.2" fill="none" stroke="#f0e8a2" stroke-width="1.1" stroke-linejoin="round" /><polyline points="269.2,397 286,416" fill="none" stroke="#cfc890" stroke-width="0.6" stroke-linejoin="round" /><polygon points="298.1,339.2 456.9,279 488.6,301.6 325.2,366" fill="#b3a32f" /><polygon points="325.2,366 488.6,301.6 482,467 330.7,467" fill="#9a8e28" /><polygon points="298.1,339.2 325.2,366 330.7,467 307.2,467" fill="#463f11" /><polyline points="298.1,339.2 456.9,279 488.6,301.6 325.2,366 298.1,339.2" fill="none" stroke="#f0e8a2" stroke-width="1.1" stroke-linejoin="round" /><polyline points="298.1,339.2 307.2,467" fill="none" stroke="#f0e8a2" stroke-width="1.1" stroke-linejoin="round" /><polyline points="325.2,366 330.7,467" fill="none" stroke="#f0e8a2" stroke-width="1.1" stroke-linejoin="round" /><polyline points="488.6,301.6 482,467" fill="none" stroke="#f0e8a2" stroke-width="1.1" stroke-linejoin="round" /><polygon points="516.5,137.7 654.3,208.2 631.1,215.3 608.8,410.8" fill="#463f11" /><polygon points="512.8,134 658.7,205.4 654.3,208.2 516.5,137.7" fill="#b3a32f" /><polyline points="512.8,134 658.7,205.4" fill="none" stroke="#f0e8a2" stroke-width="1.1" stroke-linejoin="round" /><polyline points="516.5,137.7 654.3,208.2" fill="none" stroke="#f0e8a2" stroke-width="1.1" stroke-linejoin="round" /><polyline points="511.4,132.8 516.5,137.7" fill="none" stroke="#f0e8a2" stroke-width="0.7" stroke-linejoin="round" /><polyline points="601.7,398 607.6,403.8" fill="none" stroke="#cfc890" stroke-width="0.6" stroke-linejoin="round" /><polygon points="631.1,215.3 658.7,205.4 680.3,196.6 713.7,213.7 664.8,233.1" fill="#b3a32f" /><polygon points="631.1,215.3 664.8,233.1 635.6,447.2 607.1,425.3" fill="#463f11" /><polygon points="664.8,233.1 713.7,213.7 680,423.5 635.6,447.2" fill="url(#gj)" /><polyline points="631.1,215.3 680.3,196.6 713.7,213.7 664.8,233.1 631.1,215.3 607.1,425.3 635.6,447.2 680,423.5 713.7,213.7" fill="none" stroke="#f0e8a2" stroke-width="1.1" stroke-linejoin="round" /><polyline points="664.8,233.1 635.6,447.2" fill="none" stroke="#f0e8a2" stroke-width="1.1" stroke-linejoin="round" /><polygon points="810.5,134.1 821,135.4 831.3,141.7 837.4,140.4 837.4,136.6 825,134.6" fill="#b3a32f" /><polygon points="781,159.8 831.3,141.7 837.4,142.6 837.4,166 815.7,174.7" fill="#b3a32f" /><polygon points="781,159.8 815.7,174.7 783.4,323 762,259.7" fill="#463f11" /><polygon points="815.7,174.7 837.4,166 837.4,251 782.8,327.3" fill="#9a8e28" /><polyline points="781,159.8 831.3,141.7" fill="none" stroke="#f0e8a2" stroke-width="1.1" stroke-linejoin="round" /><polyline points="781,159.8 815.7,174.7 837.4,166" fill="none" stroke="#f0e8a2" stroke-width="1.1" stroke-linejoin="round" /><polyline points="781,159.8 762,259.7" fill="none" stroke="#f0e8a2" stroke-width="1.1" stroke-linejoin="round" /><polyline points="815.7,174.7 782.8,327.3" fill="none" stroke="#f0e8a2" stroke-width="1.1" stroke-linejoin="round" /><polyline points="810.5,134.1 831.3,141.7" fill="none" stroke="#f0e8a2" stroke-width="0.8" stroke-linejoin="round" /><polyline points="819,134.6 837.4,136.8" fill="none" stroke="#f0e8a2" stroke-width="0.7" stroke-linejoin="round" /><circle cx="44.8" cy="135" r="1.1" fill="#5050cc"/><circle cx="65.6" cy="158.7" r="1.1" fill="#5050cc"/><circle cx="15.6" cy="169.8" r="1.1" fill="#5050cc"/><circle cx="37.1" cy="165.2" r="1.1" fill="#5050cc"/><circle cx="43.9" cy="163.5" r="1.1" fill="#5050cc"/><circle cx="48.2" cy="178.2" r="1.1" fill="#5050cc"/><circle cx="54.9" cy="176.9" r="1.1" fill="#5050cc"/><circle cx="132.4" cy="157.4" r="1.1" fill="#5050cc"/><circle cx="133.9" cy="160.2" r="1.1" fill="#5050cc"/><circle cx="156.8" cy="194.1" r="1.1" fill="#5050cc"/><circle cx="159.4" cy="197.3" r="1.1" fill="#5050cc"/><circle cx="189.2" cy="403.5" r="1.1" fill="#5050cc"/><circle cx="104.1" cy="409.9" r="1.1" fill="#5050cc"/><circle cx="125.3" cy="443.8" r="1.1" fill="#5050cc"/><circle cx="191.2" cy="143" r="1.1" fill="#5050cc"/><circle cx="193.4" cy="144.2" r="1.1" fill="#5050cc"/><circle cx="203.4" cy="143" r="1.1" fill="#5050cc"/><circle cx="395.8" cy="132.8" r="1.1" fill="#5050cc"/><circle cx="228.2" cy="175" r="1.1" fill="#5050cc"/><circle cx="231.8" cy="177" r="1.1" fill="#5050cc"/><circle cx="235.6" cy="176.4" r="1.1" fill="#5050cc"/><circle cx="388.6" cy="304.8" r="1.1" fill="#5050cc"/><circle cx="395.5" cy="302.3" r="1.1" fill="#5050cc"/><circle cx="298.1" cy="339.2" r="1.1" fill="#5050cc"/><circle cx="456.9" cy="279" r="1.1" fill="#5050cc"/><circle cx="488.6" cy="301.6" r="1.1" fill="#5050cc"/><circle cx="325.2" cy="366" r="1.1" fill="#5050cc"/><circle cx="631.1" cy="215.3" r="1.1" fill="#5050cc"/><circle cx="658.7" cy="205.4" r="1.1" fill="#5050cc"/><circle cx="680.3" cy="196.6" r="1.1" fill="#5050cc"/><circle cx="713.7" cy="213.7" r="1.1" fill="#5050cc"/><circle cx="664.8" cy="233.1" r="1.1" fill="#5050cc"/><circle cx="607.1" cy="425.3" r="1.1" fill="#5050cc"/><circle cx="635.6" cy="447.2" r="1.1" fill="#5050cc"/><circle cx="680" cy="423.5" r="1.1" fill="#5050cc"/><circle cx="781" cy="159.8" r="1.1" fill="#5050cc"/><circle cx="815.7" cy="174.7" r="1.1" fill="#5050cc"/><circle cx="831.3" cy="141.7" r="1.1" fill="#5050cc"/><polyline points="43,415 62.6,408.2 70.2,420.1" fill="none" stroke="#3a3c8c" stroke-width="0.9"/><polyline points="43,415 44,428.6" fill="none" stroke="#b83020" stroke-width="0.9"/><polyline points="45.6,432 72.7,436.2" fill="none" stroke="#e6dc30" stroke-width="0"/><polygon points="45.6,432 65,426 72.7,436.2 52.4,443" fill="#c8b82c"/><polyline points="45.6,432 52.4,443 72.7,436.2" fill="none" stroke="#f0e840" stroke-width="0.9"/><polyline points="70.2,420.1 58,385" fill="none" stroke="#3a3c8c" stroke-width="1.1"/><polygon points="55,377 62.6,388.7 55.6,390.4" fill="#2030c8"/><polyline points="70.2,420.1 73,435" fill="none" stroke="#3c9c2c" stroke-width="1.1"/><polyline points="73,435 82,450" fill="none" stroke="#d8d038" stroke-width="1"/><polygon points="78,448.6 87.4,447.4 86.4,458" fill="#28a428"/><circle cx="72" cy="422" r="1" fill="#d83020"/><circle cx="61.7" cy="426" r="1" fill="#d83020"/><text x="55.6" y="373.6" font-size="5.5" font-weight="bold" fill="#1c1c50" font-family="Liberation Sans,sans-serif">z</text><text x="86.6" y="459" font-size="5" fill="#d8a020" font-family="Liberation Sans,sans-serif">y</text><polyline points="16,451.5 17.6,435.5" fill="none" stroke="#2838c0" stroke-width="1"/><polyline points="16,451.5 6,453.4" fill="none" stroke="#c02818" stroke-width="1"/><polyline points="16,451.5 26,455.4" fill="none" stroke="#2c9c2c" stroke-width="1"/><polygon points="4.6,445.8 21.6,440.6 22.6,444.4 7.6,449" fill="#d02010"/><text x="16.4" y="435" font-size="5.2" font-weight="bold" fill="#2838c0" font-family="Liberation Sans,sans-serif">z</text><text x="3.6" y="456.6" font-size="5.2" font-weight="bold" fill="#c02818" font-family="Liberation Sans,sans-serif">x</text><text x="26" y="458.2" font-size="5.2" font-weight="bold" fill="#2c9c2c" font-family="Liberation Sans,sans-serif">y</text><ellipse cx="802.4" cy="45.4" rx="20.6" ry="9.8" fill="#1e1e1e" stroke="#7c7c7c" stroke-width="4"/><ellipse cx="802.4" cy="46" rx="21.6" ry="10.4" fill="none" stroke="#a0a0a0" stroke-width="0.8"/><polygon points="791.4,28.6 802.6,23 815,28 804.6,34.6" fill="#949494"/><polygon points="791.4,28.6 804.6,34.6 805.6,49.4 793.6,42.2" fill="#868686"/><polygon points="804.6,34.6 815,28 814.4,42.6 805.6,49.4" fill="#8e8e8e"/><polygon points="782.4,50 786.4,53.6 784,54.6" fill="#d8d8d8"/><polygon points="815,52.8 819,54.8 816,56.4" fill="#d8d8d8"/><polygon points="818.4,38.4 822.6,37.4 821.4,41" fill="#d8d8d8"/></g><rect x="1" y="0.8" width="836.2" height="466.2" fill="none" stroke="#716f46" stroke-width="1.8"/></svg>
<div class="a t" style="top:100.7px;font-size:7px;line-height:9px;color:#ececec;left:215.2px;letter-spacing:-0.025px;">[+] [Perspective ] [Standard ] [Edged Faces ]</div>
<svg class="a" style="left:357.6px;top:102.4px;" width="7" height="6.4" viewBox="0 0 7 6.4"><path d="M0.3 0.4 H6.4 L4 3.2 V6.2 L2.7 5.4 V3.2 Z" fill="#8a8a8a" /></svg>
<div class="a" style="left:1049.2px;top:96.2px;width:3.4px;height:468.8px;background:#3d3d3d;"></div>
<div class="a" style="left:1051.4px;top:96.2px;width:128.6px;height:468.8px;background:#444444;"></div>
<div class="a" style="left:1054px;top:98px;width:122px;height:1px;background:#5a5a5a;"></div>
<svg class="a" style="left:1056px;top:104.8px;" width="10" height="10" viewBox="0 0 10 10"><path d="M5 0.4 V9.6 M0.4 5 H9.6" fill="none" stroke="#dcdcdc" stroke-width="1.3" stroke-linecap="round" stroke-linejoin="round" /></svg>
<div class="a" style="left:1074.6px;top:103.6px;width:12.8px;height:12.4px;background:#3c3c3c;border-radius:1px;"></div>
<svg class="a" style="left:1076px;top:104.8px;" width="10" height="10" viewBox="0 0 10 10"><path d="M1 1 H9 V9 H1 Z" fill="none" stroke="#2fb8a3" stroke-width="0.9" stroke-linecap="round" stroke-linejoin="round" /><path d="M2.4 8.6 C2.6 4.6 4.6 2.8 8.4 2.4" fill="none" stroke="#f0f0f0" stroke-width="1.2" stroke-linecap="round" stroke-linejoin="round" /><rect x="0" y="0" width="2" height="2" fill="#2fb8a3" /><rect x="8" y="0" width="2" height="2" fill="#2fb8a3" /><rect x="0" y="8" width="2" height="2" fill="#2fb8a3" /><rect x="8" y="8" width="2" height="2" fill="#2fb8a3" /></svg>
<svg class="a" style="left:1095px;top:104.8px;" width="10" height="10" viewBox="0 0 10 10"><rect x="1.2" y="0.4" width="7.6" height="2.8" fill="#dcdcdc" /><path d="M2 8.4 V5.4 H8 V8.4 M5 3.2 V5.4" fill="none" stroke="#2fb8a3" stroke-width="0.9" stroke-linecap="round" stroke-linejoin="round" stroke-dasharray="1.3 0.8"/><rect x="0.8" y="7.8" width="2.4" height="2" fill="#2fb8a3" /><rect x="6.8" y="7.8" width="2.4" height="2" fill="#2fb8a3" /></svg>
<svg class="a" style="left:1114px;top:105.4px;" width="12" height="9" viewBox="0 0 12 9"><rect x="0.4" y="1" width="8" height="7" fill="#2f6d62" rx="3.4" /><circle cx="7.6" cy="4.5" r="3.6" fill="#a8a8a8" /></svg>
<svg class="a" style="left:1134px;top:105.4px;" width="11" height="9" viewBox="0 0 11 9"><rect x="0.4" y="0.4" width="10.2" height="6.2" fill="#b5b5b5" rx="0.6" /><rect x="3" y="7.4" width="5" height="1.2" fill="#9a9a9a" /></svg>
<svg class="a" style="left:1153.6px;top:104.8px;" width="11" height="10" viewBox="0 0 11 10"><path d="M1.6 1.4 C0.4 3 1.4 5 3.6 4.6 L8.6 9.4 L9.8 8.2 L5 3.4 C5.4 1.4 3.4 0.2 1.6 1.4 Z" fill="#cfcfcf" /></svg>
<div class="a" style="left:1054px;top:121.8px;width:108.6px;height:12.4px;background:#5c5c5c;"></div>
<div class="a t" style="top:123.3px;font-size:7.2px;line-height:10px;color:#f0f0f0;left:1055.6px;letter-spacing:-0.261px;">Line005</div>
<div class="a" style="left:1165.6px;top:121.6px;width:12.8px;height:13px;background:#c6b236;box-shadow:inset 0 0 0 1px #3c3a20;border-radius:1.5px;"></div>
<div class="a" style="left:1054px;top:137.8px;width:123.2px;height:11.6px;background:#5c5c5c;"></div>
<div class="a t" style="top:138.7px;font-size:7.2px;line-height:10px;color:#f0f0f0;left:1055px;letter-spacing:-0.293px;">Modifier List</div>
<svg class="a" style="left:1169.6px;top:142.4px;" width="4.6" height="3" viewBox="0 0 4.6 3"><path d="M0 0 H4.6 L2.3 3 Z" fill="#f0f0f0" /></svg>
<div class="a" style="left:1053.2px;top:152.8px;width:125.2px;height:77.8px;background:#363636;"></div>
<div class="a" style="left:1072.6px;top:164.4px;width:104.4px;height:10.4px;background:#4f86cc;"></div>
<div class="a" style="left:1054.4px;top:215px;width:123px;height:1px;background:#5a5a5a;"></div>
<div class="a" style="left:1053.2px;top:152.8px;width:125.2px;height:77.8px;box-shadow:inset 0 0 0 1px #d0d0d0;"></div>
<svg class="a" style="left:1057.4px;top:156.8px;" width="5" height="4" viewBox="0 0 5 4"><path d="M0.2 0.4 H4.6 L2.4 3.6 Z" fill="#f0f0f0" /></svg>
<div class="a t" style="top:154.9px;font-size:7px;line-height:9px;color:#f0f0f0;left:1067px;letter-spacing:-0.220px;">Editable Poly</div>
<div class="a t" style="top:165.2px;font-size:7px;line-height:9px;color:#f4f4f4;left:1073.2px;letter-spacing:-0.041px;">Vertex</div>
<div class="a t" style="top:175.8px;font-size:7px;line-height:9px;color:#f4f4f4;left:1073.2px;letter-spacing:-0.237px;">Edge</div>
<div class="a t" style="top:186.1px;font-size:7px;line-height:9px;color:#f4f4f4;left:1073.2px;letter-spacing:-0.168px;">Border</div>
<div class="a t" style="top:196.5px;font-size:7px;line-height:9px;color:#f4f4f4;left:1073.2px;letter-spacing:-0.185px;">Polygon</div>
<div class="a t" style="top:206.9px;font-size:7px;line-height:9px;color:#f4f4f4;left:1073.2px;letter-spacing:-0.240px;">Element</div>
<svg class="a" style="left:1060px;top:162px;" width="12" height="52" viewBox="0 0 12 52"><path d="M1.2 0 V49.4 M1.2 7.8 H11 M1.2 18.2 H11 M1.2 28.6 H11 M1.2 39 H11 M1.2 49.4 H11" fill="none" stroke="#6e6e6e" stroke-width="0.7" stroke-linecap="round" stroke-linejoin="round" /></svg>
<svg class="a" style="left:1167px;top:155.6px;" width="7" height="6.6" viewBox="0 0 7 6.6"><path d="M1.4 3.2 L5.4 1 M1.4 3.2 L5.4 5.6" fill="none" stroke="#f4f4f4" stroke-width="0.7" stroke-linecap="round" stroke-linejoin="round" /><circle cx="1.4" cy="3.2" r="1.2" fill="#f4f4f4" /><circle cx="5.4" cy="1.2" r="1.1" fill="#f4f4f4" /><circle cx="5.4" cy="5.4" r="1.1" fill="#f4f4f4" /></svg>
<svg class="a" style="left:1167px;top:166.4px;" width="7" height="6.6" viewBox="0 0 7 6.6"><path d="M1.4 3.2 L5.4 1 M1.4 3.2 L5.4 5.6" fill="none" stroke="#f4f4f4" stroke-width="0.7" stroke-linecap="round" stroke-linejoin="round" /><circle cx="1.4" cy="3.2" r="1.2" fill="#f4f4f4" /><circle cx="5.4" cy="1.2" r="1.1" fill="#f4f4f4" /><circle cx="5.4" cy="5.4" r="1.1" fill="#f4f4f4" /></svg>
<svg class="a" style="left:1056.6px;top:237.6px;" width="8" height="8.6" viewBox="0 0 8 8.6"><path d="M4.4 0.6 L7.4 3.6 L6.2 4 L4.6 5.6 L4.6 7 L1 3.4 L2.4 3.4 L4 1.8 Z" fill="#dcdcdc" /><path d="M2.6 5.4 L0.6 7.8" fill="none" stroke="#dcdcdc" stroke-width="0.8" stroke-linecap="round" stroke-linejoin="round" /></svg>
<div class="a" style="left:1071.5px;top:237px;width:1px;height:9.4px;background:#2c2c2c;"></div>
<svg class="a" style="left:1079.6px;top:237px;" width="6" height="9.6" viewBox="0 0 6 9.6"><rect x="1" y="0.6" width="4" height="8.4" fill="#d8d8d8" rx="0.8" /><rect x="1.8" y="3.2" width="2.4" height="5" fill="#2fb8a3" /></svg>
<div class="a" style="left:1093.1px;top:237px;width:1px;height:9.4px;background:#2c2c2c;"></div>
<svg class="a" style="left:1099.6px;top:237.8px;" width="9" height="8" viewBox="0 0 9 8"><rect x="0.6" y="0.8" width="4" height="3.4" fill="none" stroke="#5c5c5c" stroke-width="0.8" /><rect x="4" y="3.6" width="4.4" height="3.6" fill="none" stroke="#5c5c5c" stroke-width="0.8" /></svg>
<svg class="a" style="left:1116px;top:237px;" width="6.4" height="9.6" viewBox="0 0 6.4 9.6"><rect x="0.8" y="2" width="4.8" height="7" fill="none" stroke="#c8c8c8" stroke-width="0.9" rx="0.6" /><path d="M0.2 1.6 H6.2 M2.2 0.6 H4.2 M2.4 3.6 V7.6 M4 3.6 V7.6" fill="none" stroke="#c8c8c8" stroke-width="0.7" stroke-linecap="round" stroke-linejoin="round" /></svg>
<div class="a" style="left:1129.5px;top:237px;width:1px;height:9.4px;background:#2c2c2c;"></div>
<svg class="a" style="left:1136.6px;top:237.4px;" width="9" height="9" viewBox="0 0 9 9"><rect x="0.6" y="0.8" width="7" height="7.6" fill="#d8d8d8" /><path d="M1.6 2.6 H6.6 M1.6 4.4 H6.6 M1.6 6.2 H6.6" fill="none" stroke="#f3b42c" stroke-width="0.8" stroke-linecap="round" stroke-linejoin="round" /><path d="M4.4 7 L8.4 2.4" fill="none" stroke="#7a3c2c" stroke-width="1.2" stroke-linecap="round" stroke-linejoin="round" /></svg>
<div class="a" style="left:1056px;top:264px;width:54px;height:1px;background:#5a5a5a;"></div>
<div class="a" style="left:1122px;top:264px;width:52px;height:1px;background:#5a5a5a;"></div>
<div class="a" style="left:1111.6px;top:263.2px;width:8.4px;height:2.4px;background:#6a6a6a;border-radius:1px;"></div>
<div class="a" style="left:1176.2px;top:268px;width:2px;height:295px;background:#3a3a3a;"></div>
<div class="a" style="left:1176.4px;top:269px;width:1.6px;height:93px;background:#5e5e5e;"></div>
<div class="a" style="left:1052.8px;top:269px;width:120.6px;height:158.8px;background:#4a4a4a;border-radius:1.5px;"></div>
<svg class="a" style="left:1056.4px;top:273.4px;" width="4.4" height="3.4" viewBox="0 0 4.4 3.4"><path d="M0.2 0.4 H4.2 L2.2 3 Z" fill="#e6e6e6" /></svg>
<div class="a t" style="top:270.1px;font-size:7.2px;line-height:10px;color:#f4f4f4;left:1064.6px;letter-spacing:-0.068px;font-weight:bold;">Selection</div>
<svg class="a" style="left:1165.4px;top:272.4px;" width="3" height="5" viewBox="0 0 3 5"><path d="M0.4 0.6 H2.6 M0.4 2.4 H2.6 M0.4 4.2 H2.6" fill="none" stroke="#5c5c5c" stroke-width="0.7" stroke-linecap="round" stroke-linejoin="round" /></svg>
<div class="a" style="left:1074.6px;top:282.6px;width:14.2px;height:13.6px;background:#5b8fd2;border-radius:1.5px;"></div>
<svg class="a" style="left:1076.2px;top:283.8px;" width="11" height="11" viewBox="0 0 11 11"><circle cx="2.4" cy="5" r="1.5" fill="none" stroke="#f4f4f4" stroke-width="0.9" /><circle cx="7.8" cy="2.2" r="1.5" fill="none" stroke="#f4f4f4" stroke-width="0.9" /><circle cx="8" cy="8.2" r="1.5" fill="none" stroke="#f4f4f4" stroke-width="0.9" /><circle cx="4.4" cy="9" r="0.8" fill="#f4f4f4" /></svg>
<svg class="a" style="left:1091px;top:283.8px;" width="11" height="11" viewBox="0 0 11 11"><path d="M1 6.4 L9.4 1.4 L7.4 9.8 Z" fill="none" stroke="#2fb8a3" stroke-width="1.1" stroke-linecap="round" stroke-linejoin="round" /></svg>
<svg class="a" style="left:1106px;top:283.8px;" width="11" height="11" viewBox="0 0 11 11"><path d="M3.4 1 C9 1.6 9 9.4 3.4 10 C6.4 7.4 6.4 3.6 3.4 1 Z" fill="none" stroke="#2fb8a3" stroke-width="1.1" stroke-linecap="round" stroke-linejoin="round" /></svg>
<svg class="a" style="left:1121px;top:284.2px;" width="10" height="10" viewBox="0 0 10 10"><rect x="0.8" y="0.8" width="8.4" height="8.4" fill="#42c6c0" /></svg>
<svg class="a" style="left:1135px;top:283.8px;" width="11" height="11" viewBox="0 0 11 11"><path d="M5.5 0.8 L10 3 V8 L5.5 10.4 L1 8 V3 Z" fill="#42c6c0" /><path d="M1 3 L5.5 5.2 L10 3 M5.5 5.2 V10.4" fill="none" stroke="#2a6a66" stroke-width="0.8" stroke-linecap="round" stroke-linejoin="round" /></svg>
<div class="a" style="left:1070.6px;top:301.4px;width:5.8px;height:6px;background:#505050;border-radius:1px;"></div>
<div class="a t" style="top:300.1px;font-size:7px;line-height:9px;color:#666666;left:1079.8px;">By Vertex</div>
<div class="a" style="left:1064.4px;top:316px;width:96.2px;height:18.6px;box-shadow:inset 0 0 0 1px #3c3c3c;border-radius:1.5px;"></div>
<div class="a" style="left:1066px;top:312px;width:46px;height:8px;background:#4a4a4a;"></div>
<div class="a t" style="top:311.7px;font-size:7px;line-height:9px;color:#f0f0f0;left:1067px;letter-spacing:-0.301px;">Optional Culling</div>
<div class="a" style="left:1067.6px;top:323px;width:43px;height:9.6px;background:#595959;border-radius:1px;"></div>
<div class="a t" style="top:323.5px;font-size:7px;line-height:9px;color:#eeeeee;left:1074.7px;">Backface</div>
<div class="a" style="left:1113.8px;top:323px;width:43.4px;height:9.6px;background:#595959;border-radius:1px;"></div>
<div class="a t" style="top:323.5px;font-size:7px;line-height:9px;color:#eeeeee;left:1120.71px;">Occluded</div>
<div class="a" style="left:1070.6px;top:340.4px;width:5.8px;height:6px;background:#505050;border-radius:1px;"></div>
<div class="a t" style="top:339.1px;font-size:7px;line-height:9px;color:#6c6c6c;left:1079.8px;">By Angle:</div>
<div class="a t" style="top:339.1px;font-size:7px;line-height:9px;color:#6a6a6a;left:1111.8px;">45,0</div>
<svg class="a" style="left:1153.8px;top:340.4px;" width="3.2" height="6" viewBox="0 0 3.2 6"><path d="M1.6 0.2 L3 2.2 H0.2 Z M1.6 5.8 L3 3.8 H0.2 Z" fill="#6a6a6a" /></svg>
<div class="a" style="left:1068.6px;top:350.4px;width:43.2px;height:9.8px;background:#595959;border-radius:1px;"></div>
<div class="a t" style="top:351px;font-size:7px;line-height:9px;color:#eeeeee;left:1080.28px;">Shrink</div>
<div class="a" style="left:1117px;top:350.4px;width:43.2px;height:9.8px;background:#595959;border-radius:1px;"></div>
<div class="a t" style="top:351px;font-size:7px;line-height:9px;color:#eeeeee;left:1130.24px;">Grow</div>
<div class="a" style="left:1068.6px;top:363.2px;width:34.2px;height:9.8px;background:#525252;border-radius:1px;"></div>
<div class="a t" style="top:363.8px;font-size:7px;line-height:9px;color:#747474;left:1078.5px;">Ring</div>
<div class="a" style="left:1117px;top:363.2px;width:33.8px;height:9.8px;background:#525252;border-radius:1px;"></div>
<div class="a t" style="top:363.8px;font-size:7px;line-height:9px;color:#747474;left:1126.11px;">Loop</div>
<svg class="a" style="left:1107px;top:365px;" width="3.2" height="6" viewBox="0 0 3.2 6"><path d="M1.6 0.2 L3 2.2 H0.2 Z M1.6 5.8 L3 3.8 H0.2 Z" fill="#8a8a8a" /></svg>
<svg class="a" style="left:1155.2px;top:365px;" width="3.2" height="6" viewBox="0 0 3.2 6"><path d="M1.6 0.2 L3 2.2 H0.2 Z M1.6 5.8 L3 3.8 H0.2 Z" fill="#8a8a8a" /></svg>
<div class="a" style="left:1063.6px;top:380.6px;width:97px;height:19.6px;box-shadow:inset 0 0 0 1px #3c3c3c;border-radius:1.5px;"></div>
<div class="a" style="left:1065.4px;top:376.6px;width:54px;height:8px;background:#4a4a4a;"></div>
<div class="a t" style="top:376.3px;font-size:7px;line-height:9px;color:#f0f0f0;left:1066.4px;letter-spacing:-0.214px;">Preview Selection</div>
<svg class="a" style="left:1066.6px;top:388.4px;" width="6" height="6" viewBox="0 0 6 6"><circle cx="3" cy="3" r="2.7" fill="#5a5a5a" /><circle cx="3" cy="3" r="1.9" fill="#f4f4f4" /></svg>
<div class="a t" style="top:387.1px;font-size:7px;line-height:9px;color:#f0f0f0;left:1076px;">Off</div>
<svg class="a" style="left:1096.6px;top:388.4px;" width="6" height="6" viewBox="0 0 6 6"><circle cx="3" cy="3" r="2.8" fill="#5c5c5c" /></svg>
<div class="a t" style="top:387.1px;font-size:7px;line-height:9px;color:#f0f0f0;left:1106px;letter-spacing:-0.291px;">SubObj</div>
<svg class="a" style="left:1134.4px;top:388.4px;" width="6" height="6" viewBox="0 0 6 6"><circle cx="3" cy="3" r="2.8" fill="#5c5c5c" /></svg>
<div class="a t" style="top:387.1px;font-size:7px;line-height:9px;color:#f0f0f0;left:1143.8px;letter-spacing:-0.156px;overflow:hidden;width:14.4px;">Multi</div>
<div class="a t" style="top:404.4px;font-size:7px;line-height:9px;color:#f0f0f0;left:1101px;letter-spacing:-0.217px;">2 Vertices Selected</div>
<div class="a" style="left:1052.8px;top:431.4px;width:120.6px;height:11.4px;background:#4a4a4a;border-radius:1.5px;"></div>
<svg class="a" style="left:1057px;top:434.9px;" width="3.4" height="4.4" viewBox="0 0 3.4 4.4"><path d="M0.4 0.2 V4.2 L3 2.2 Z" fill="#e6e6e6" /></svg>
<div class="a t" style="top:432.2px;font-size:7.2px;line-height:10px;color:#f4f4f4;left:1064.6px;letter-spacing:-0.000px;font-weight:bold;">Soft Selection</div>
<svg class="a" style="left:1165.4px;top:434.5px;" width="3" height="5" viewBox="0 0 3 5"><path d="M0.4 0.6 H2.6 M0.4 2.4 H2.6 M0.4 4.2 H2.6" fill="none" stroke="#5c5c5c" stroke-width="0.7" stroke-linecap="round" stroke-linejoin="round" /></svg>
<div class="a" style="left:1052.8px;top:445px;width:120.6px;height:118.4px;background:#4a4a4a;border-radius:1.5px;"></div>
<svg class="a" style="left:1056.4px;top:449.3px;" width="4.4" height="3.4" viewBox="0 0 4.4 3.4"><path d="M0.2 0.4 H4.2 L2.2 3 Z" fill="#e6e6e6" /></svg>
<div class="a t" style="top:446px;font-size:7.2px;line-height:10px;color:#f4f4f4;left:1064.6px;letter-spacing:0.029px;font-weight:bold;">Edit Vertices</div>
<svg class="a" style="left:1165.4px;top:448.3px;" width="3" height="5" viewBox="0 0 3 5"><path d="M0.4 0.6 H2.6 M0.4 2.4 H2.6 M0.4 4.2 H2.6" fill="none" stroke="#5c5c5c" stroke-width="0.7" stroke-linecap="round" stroke-linejoin="round" /></svg>
<div class="a" style="left:1068.2px;top:462.2px;width:42.4px;height:9.2px;background:#595959;border-radius:1px;"></div>
<div class="a t" style="top:462.5px;font-size:7px;line-height:9px;color:#eeeeee;left:1076.37px;">Remove</div>
<div class="a" style="left:1115px;top:462.2px;width:43px;height:9.2px;background:#595959;border-radius:1px;"></div>
<div class="a t" style="top:462.5px;font-size:7px;line-height:9px;color:#eeeeee;left:1127.36px;">Break</div>
<div class="a" style="left:1068.2px;top:475.6px;width:32.8px;height:9.2px;background:#595959;border-radius:1px;"></div>
<div class="a t" style="top:475.9px;font-size:7px;line-height:9px;color:#eeeeee;left:1072.54px;">Extrude</div>
<div class="a" style="left:1102.8px;top:475.6px;width:7.8px;height:9.2px;background:#595959;border-radius:1px;"></div>
<div class="a" style="left:1104.4px;top:477.6px;width:4.6px;height:5.2px;background:#2a2a2a;border-radius:0.8px;"></div>
<div class="a" style="left:1105.4px;top:479.2px;width:2.6px;height:2.6px;background:#8a8a8a;"></div>
<div class="a" style="left:1115px;top:475.6px;width:33.2px;height:9.2px;background:#595959;border-radius:1px;"></div>
<div class="a t" style="top:475.9px;font-size:7px;line-height:9px;color:#eeeeee;left:1123.69px;">Weld</div>
<div class="a" style="left:1149.8px;top:475.6px;width:8.2px;height:9.2px;background:#595959;border-radius:1px;"></div>
<div class="a" style="left:1151.4px;top:477.6px;width:5px;height:5.2px;background:#2a2a2a;border-radius:0.8px;"></div>
<div class="a" style="left:1152.4px;top:479.2px;width:3px;height:2.6px;background:#8a8a8a;"></div>
<div class="a" style="left:1068.2px;top:489.6px;width:32.8px;height:9.2px;background:#595959;border-radius:1px;"></div>
<div class="a t" style="top:489.9px;font-size:7px;line-height:9px;color:#eeeeee;left:1071.18px;">Chamfer</div>
<div class="a" style="left:1102.8px;top:489.6px;width:7.8px;height:9.2px;background:#595959;border-radius:1px;"></div>
<div class="a" style="left:1104.4px;top:491.6px;width:4.6px;height:5.2px;background:#2a2a2a;border-radius:0.8px;"></div>
<div class="a" style="left:1105.4px;top:493.2px;width:2.6px;height:2.6px;background:#8a8a8a;"></div>
<div class="a" style="left:1115px;top:489.6px;width:43px;height:9.2px;background:#595959;border-radius:1px;"></div>
<div class="a t" style="top:489.9px;font-size:7px;line-height:9px;color:#eeeeee;left:1117.89px;">Target Weld</div>
<div class="a" style="left:1091.4px;top:503.8px;width:42.6px;height:9.2px;background:#595959;border-radius:1px;"></div>
<div class="a t" style="top:504.1px;font-size:7px;line-height:9px;color:#eeeeee;left:1099.66px;">Connect</div>
<div class="a" style="left:1068.2px;top:518px;width:89.8px;height:9.2px;background:#595959;border-radius:1px;"></div>
<div class="a t" style="top:518.3px;font-size:7px;line-height:9px;color:#eeeeee;left:1073.41px;">Remove Isolated Vertices</div>
<div class="a" style="left:1068.2px;top:531.4px;width:89.8px;height:9.2px;background:#595959;border-radius:1px;"></div>
<div class="a t" style="top:531.7px;font-size:7px;line-height:9px;color:#eeeeee;left:1070.3px;">Remove Unused Map Verts</div>
<div class="a" style="left:1066.4px;top:544.8px;width:93.4px;height:18.6px;box-shadow:inset 0 0 0 1px #3c3c3c;border-radius:1.5px;border-bottom-left-radius:0;border-bottom-right-radius:0;"></div>
<div class="a t" style="top:548.9px;font-size:7px;line-height:9px;color:#f0f0f0;left:1075px;">Weight:</div>
<div class="a" style="left:1102.8px;top:548.6px;width:42.4px;height:9.8px;background:#5c5c5c;border-radius:1px;"></div>
<div class="a t" style="top:549.1px;font-size:7px;line-height:9px;color:#f0f0f0;left:1105px;">1,0</div>
<svg class="a" style="left:1140.4px;top:550.4px;" width="3.2" height="6" viewBox="0 0 3.2 6"><path d="M1.6 0.2 L3 2.2 H0.2 Z M1.6 5.8 L3 3.8 H0.2 Z" fill="#e8e8e8" /></svg>
<div class="a" style="left:1.5px;top:565px;width:1178.5px;height:13.6px;background:#444444;"></div>
<div class="a" style="left:7px;top:566.8px;width:8.8px;height:10.2px;background:#5c5c5c;border-radius:1px;"></div>
<div class="a t" style="top:567px;font-size:7.4px;line-height:10px;color:#d8d8d8;left:9.24px;">&lt;</div>
<div class="a" style="left:16.6px;top:566.8px;width:75.4px;height:10.2px;background:#5e5e5e;border-radius:1px;"></div>
<div class="a t" style="top:567.2px;font-size:7.2px;line-height:10px;color:#ececec;left:42.59px;">0 / 100</div>
<div class="a" style="left:93px;top:566.8px;width:8.8px;height:10.2px;background:#5c5c5c;border-radius:1px;"></div>
<div class="a t" style="top:567px;font-size:7.4px;line-height:10px;color:#d8d8d8;left:95.24px;">&gt;</div>
<div class="a" style="left:1.5px;top:578.6px;width:1178.5px;height:23.8px;background:#444444;"></div>
<div class="a" style="left:38px;top:579.4px;width:1112.6px;height:21.8px;background:#2c2c2c;"></div>
<svg class="a" style="left:14px;top:584px;" width="10" height="8" viewBox="0 0 10 8"><path d="M0.8 0.6 V1.8 M0.8 3 V4.2 M0.8 5.4 V6.6" fill="none" stroke="#dcdcdc" stroke-width="1" stroke-linecap="round" stroke-linejoin="round" /><path d="M3 4.6 C4 0.6 5.4 0.6 6.2 4 C7 7.4 8.4 7.4 9.4 3.4" fill="none" stroke="#2fb8a3" stroke-width="1" stroke-linecap="round" stroke-linejoin="round" /></svg>
<svg class="a" style="left:38px;top:579.4px;" width="1112.6" height="22" viewBox="0 0 1112.6 22"><rect x="2.45" y="1.6" width="0.9" height="6.6" fill="#a4a4a4"/><rect x="13.51" y="1.6" width="0.9" height="5.6" fill="#8e8e8e"/><rect x="24.57" y="1.6" width="0.9" height="5.6" fill="#8e8e8e"/><rect x="35.63" y="1.6" width="0.9" height="5.6" fill="#8e8e8e"/><rect x="46.69" y="1.6" width="0.9" height="5.6" fill="#8e8e8e"/><rect x="57.75" y="1.6" width="0.9" height="6.6" fill="#a4a4a4"/><rect x="68.81" y="1.6" width="0.9" height="5.6" fill="#8e8e8e"/><rect x="79.87" y="1.6" width="0.9" height="5.6" fill="#8e8e8e"/><rect x="90.93" y="1.6" width="0.9" height="5.6" fill="#8e8e8e"/><rect x="101.99" y="1.6" width="0.9" height="5.6" fill="#8e8e8e"/><rect x="113.05" y="1.6" width="0.9" height="6.6" fill="#a4a4a4"/><rect x="124.11" y="1.6" width="0.9" height="5.6" fill="#8e8e8e"/><rect x="135.17" y="1.6" width="0.9" height="5.6" fill="#8e8e8e"/><rect x="146.23" y="1.6" width="0.9" height="5.6" fill="#8e8e8e"/><rect x="157.29" y="1.6" width="0.9" height="5.6" fill="#8e8e8e"/><rect x="168.35" y="1.6" width="0.9" height="6.6" fill="#a4a4a4"/><rect x="179.41" y="1.6" width="0.9" height="5.6" fill="#8e8e8e"/><rect x="190.47" y="1.6" width="0.9" height="5.6" fill="#8e8e8e"/><rect x="201.53" y="1.6" width="0.9" height="5.6" fill="#8e8e8e"/><rect x="212.59" y="1.6" width="0.9" height="5.6" fill="#8e8e8e"/><rect x="223.65" y="1.6" width="0.9" height="6.6" fill="#a4a4a4"/><rect x="234.71" y="1.6" width="0.9" height="5.6" fill="#8e8e8e"/><rect x="245.77" y="1.6" width="0.9" height="5.6" fill="#8e8e8e"/><rect x="256.83" y="1.6" width="0.9" height="5.6" fill="#8e8e8e"/><rect x="267.89" y="1.6" width="0.9" height="5.6" fill="#8e8e8e"/><rect x="278.95" y="1.6" width="0.9" height="6.6" fill="#a4a4a4"/><rect x="290.01" y="1.6" width="0.9" height="5.6" fill="#8e8e8e"/><rect x="301.07" y="1.6" width="0.9" height="5.6" fill="#8e8e8e"/><rect x="312.13" y="1.6" width="0.9" height="5.6" fill="#8e8e8e"/><rect x="323.19" y="1.6" width="0.9" height="5.6" fill="#8e8e8e"/><rect x="334.25" y="1.6" width="0.9" height="6.6" fill="#a4a4a4"/><rect x="345.31" y="1.6" width="0.9" height="5.6" fill="#8e8e8e"/><rect x="356.37" y="1.6" width="0.9" height="5.6" fill="#8e8e8e"/><rect x="367.43" y="1.6" width="0.9" height="5.6" fill="#8e8e8e"/><rect x="378.49" y="1.6" width="0.9" height="5.6" fill="#8e8e8e"/><rect x="389.55" y="1.6" width="0.9" height="6.6" fill="#a4a4a4"/><rect x="400.61" y="1.6" width="0.9" height="5.6" fill="#8e8e8e"/><rect x="411.67" y="1.6" width="0.9" height="5.6" fill="#8e8e8e"/><rect x="422.73" y="1.6" width="0.9" height="5.6" fill="#8e8e8e"/><rect x="433.79" y="1.6" width="0.9" height="5.6" fill="#8e8e8e"/><rect x="444.85" y="1.6" width="0.9" height="6.6" fill="#a4a4a4"/><rect x="455.91" y="1.6" width="0.9" height="5.6" fill="#8e8e8e"/><rect x="466.97" y="1.6" width="0.9" height="5.6" fill="#8e8e8e"/><rect x="478.03" y="1.6" width="0.9" height="5.6" fill="#8e8e8e"/><rect x="489.09" y="1.6" width="0.9" height="5.6" fill="#8e8e8e"/><rect x="500.15" y="1.6" width="0.9" height="6.6" fill="#a4a4a4"/><rect x="511.21" y="1.6" width="0.9" height="5.6" fill="#8e8e8e"/><rect x="522.27" y="1.6" width="0.9" height="5.6" fill="#8e8e8e"/><rect x="533.33" y="1.6" width="0.9" height="5.6" fill="#8e8e8e"/><rect x="544.39" y="1.6" width="0.9" height="5.6" fill="#8e8e8e"/><rect x="555.45" y="1.6" width="0.9" height="6.6" fill="#a4a4a4"/><rect x="566.51" y="1.6" width="0.9" height="5.6" fill="#8e8e8e"/><rect x="577.57" y="1.6" width="0.9" height="5.6" fill="#8e8e8e"/><rect x="588.63" y="1.6" width="0.9" height="5.6" fill="#8e8e8e"/><rect x="599.69" y="1.6" width="0.9" height="5.6" fill="#8e8e8e"/><rect x="610.75" y="1.6" width="0.9" height="6.6" fill="#a4a4a4"/><rect x="621.81" y="1.6" width="0.9" height="5.6" fill="#8e8e8e"/><rect x="632.87" y="1.6" width="0.9" height="5.6" fill="#8e8e8e"/><rect x="643.93" y="1.6" width="0.9" height="5.6" fill="#8e8e8e"/><rect x="654.99" y="1.6" width="0.9" height="5.6" fill="#8e8e8e"/><rect x="666.05" y="1.6" width="0.9" height="6.6" fill="#a4a4a4"/><rect x="677.11" y="1.6" width="0.9" height="5.6" fill="#8e8e8e"/><rect x="688.17" y="1.6" width="0.9" height="5.6" fill="#8e8e8e"/><rect x="699.23" y="1.6" width="0.9" height="5.6" fill="#8e8e8e"/><rect x="710.29" y="1.6" width="0.9" height="5.6" fill="#8e8e8e"/><rect x="721.35" y="1.6" width="0.9" height="6.6" fill="#a4a4a4"/><rect x="732.41" y="1.6" width="0.9" height="5.6" fill="#8e8e8e"/><rect x="743.47" y="1.6" width="0.9" height="5.6" fill="#8e8e8e"/><rect x="754.53" y="1.6" width="0.9" height="5.6" fill="#8e8e8e"/><rect x="765.59" y="1.6" width="0.9" height="5.6" fill="#8e8e8e"/><rect x="776.65" y="1.6" width="0.9" height="6.6" fill="#a4a4a4"/><rect x="787.71" y="1.6" width="0.9" height="5.6" fill="#8e8e8e"/><rect x="798.77" y="1.6" width="0.9" height="5.6" fill="#8e8e8e"/><rect x="809.83" y="1.6" width="0.9" height="5.6" fill="#8e8e8e"/><rect x="820.89" y="1.6" width="0.9" height="5.6" fill="#8e8e8e"/><rect x="831.95" y="1.6" width="0.9" height="6.6" fill="#a4a4a4"/><rect x="843.01" y="1.6" width="0.9" height="5.6" fill="#8e8e8e"/><rect x="854.07" y="1.6" width="0.9" height="5.6" fill="#8e8e8e"/><rect x="865.13" y="1.6" width="0.9" height="5.6" fill="#8e8e8e"/><rect x="876.19" y="1.6" width="0.9" height="5.6" fill="#8e8e8e"/><rect x="887.25" y="1.6" width="0.9" height="6.6" fill="#a4a4a4"/><rect x="898.31" y="1.6" width="0.9" height="5.6" fill="#8e8e8e"/><rect x="909.37" y="1.6" width="0.9" height="5.6" fill="#8e8e8e"/><rect x="920.43" y="1.6" width="0.9" height="5.6" fill="#8e8e8e"/><rect x="931.49" y="1.6" width="0.9" height="5.6" fill="#8e8e8e"/><rect x="942.55" y="1.6" width="0.9" height="6.6" fill="#a4a4a4"/><rect x="953.61" y="1.6" width="0.9" height="5.6" fill="#8e8e8e"/><rect x="964.67" y="1.6" width="0.9" height="5.6" fill="#8e8e8e"/><rect x="975.73" y="1.6" width="0.9" height="5.6" fill="#8e8e8e"/><rect x="986.79" y="1.6" width="0.9" height="5.6" fill="#8e8e8e"/><rect x="997.85" y="1.6" width="0.9" height="6.6" fill="#a4a4a4"/><rect x="1008.91" y="1.6" width="0.9" height="5.6" fill="#8e8e8e"/><rect x="1019.97" y="1.6" width="0.9" height="5.6" fill="#8e8e8e"/><rect x="1031.03" y="1.6" width="0.9" height="5.6" fill="#8e8e8e"/><rect x="1042.09" y="1.6" width="0.9" height="5.6" fill="#8e8e8e"/><rect x="1053.15" y="1.6" width="0.9" height="6.6" fill="#a4a4a4"/><rect x="1064.21" y="1.6" width="0.9" height="5.6" fill="#8e8e8e"/><rect x="1075.27" y="1.6" width="0.9" height="5.6" fill="#8e8e8e"/><rect x="1086.33" y="1.6" width="0.9" height="5.6" fill="#8e8e8e"/><rect x="1097.39" y="1.6" width="0.9" height="5.6" fill="#8e8e8e"/><rect x="1108.45" y="1.6" width="0.9" height="6.6" fill="#a4a4a4"/></svg>
<div class="a" style="left:39.4px;top:580px;width:3.6px;height:13.4px;background:#a89c38;border-radius:1px;"></div>
<div class="a" style="left:40.2px;top:581px;width:2px;height:7px;background:#c8bc58;"></div>
<div class="a t" style="top:587.5px;font-size:6.4px;line-height:9px;color:#d8d038;left:39.52px;">0</div>
<div class="a t" style="top:587.3px;font-size:6.6px;line-height:9px;color:#c4c4c4;left:93.76px;">5</div>
<div class="a t" style="top:587.3px;font-size:6.6px;line-height:9px;color:#c4c4c4;left:147.23px;">10</div>
<div class="a t" style="top:587.3px;font-size:6.6px;line-height:9px;color:#c4c4c4;left:202.53px;">15</div>
<div class="a t" style="top:587.3px;font-size:6.6px;line-height:9px;color:#c4c4c4;left:257.83px;">20</div>
<div class="a t" style="top:587.3px;font-size:6.6px;line-height:9px;color:#c4c4c4;left:313.13px;">25</div>
<div class="a t" style="top:587.3px;font-size:6.6px;line-height:9px;color:#c4c4c4;left:368.43px;">30</div>
<div class="a t" style="top:587.3px;font-size:6.6px;line-height:9px;color:#c4c4c4;left:423.73px;">35</div>
<div class="a t" style="top:587.3px;font-size:6.6px;line-height:9px;color:#c4c4c4;left:479.03px;">40</div>
<div class="a t" style="top:587.3px;font-size:6.6px;line-height:9px;color:#c4c4c4;left:534.33px;">45</div>
<div class="a t" style="top:587.3px;font-size:6.6px;line-height:9px;color:#c4c4c4;left:589.63px;">50</div>
<div class="a t" style="top:587.3px;font-size:6.6px;line-height:9px;color:#c4c4c4;left:644.93px;">55</div>
<div class="a t" style="top:587.3px;font-size:6.6px;line-height:9px;color:#c4c4c4;left:700.23px;">60</div>
<div class="a t" style="top:587.3px;font-size:6.6px;line-height:9px;color:#c4c4c4;left:755.53px;">65</div>
<div class="a t" style="top:587.3px;font-size:6.6px;line-height:9px;color:#c4c4c4;left:810.83px;">70</div>
<div class="a t" style="top:587.3px;font-size:6.6px;line-height:9px;color:#c4c4c4;left:866.13px;">75</div>
<div class="a t" style="top:587.3px;font-size:6.6px;line-height:9px;color:#c4c4c4;left:921.43px;">80</div>
<div class="a t" style="top:587.3px;font-size:6.6px;line-height:9px;color:#c4c4c4;left:976.73px;">85</div>
<div class="a t" style="top:587.3px;font-size:6.6px;line-height:9px;color:#c4c4c4;left:1032.03px;">90</div>
<div class="a t" style="top:587.3px;font-size:6.6px;line-height:9px;color:#c4c4c4;left:1087.33px;">95</div>
<div class="a t" style="top:587.3px;font-size:6.6px;line-height:9px;color:#c4c4c4;left:1139.39px;">100</div>
<div class="a" style="left:1150.6px;top:579.4px;width:1.4px;height:21.8px;background:#3a3a3a;"></div>
<div class="a" style="left:1.5px;top:602.4px;width:1178.5px;height:34.6px;background:#444444;"></div>
<div class="a" style="left:3.8px;top:606.4px;width:59.8px;height:13.6px;background:#dcc4c8;"></div>
<div class="a" style="left:3.8px;top:606.4px;width:59.8px;height:13.6px;box-shadow:inset 0 0 0 1px #f2f2f2;"></div>
<div class="a" style="left:3.8px;top:621px;width:59.8px;height:13.2px;background:#f6f6f6;"></div>
<div class="a t" style="top:621px;font-size:7.3px;line-height:10px;color:#8a8a8a;left:6.8px;font-family:'Liberation Mono',monospace;overflow:hidden;width:55.4px;">MAXScript Mi:</div>
<div class="a t" style="top:609.7px;font-size:7px;line-height:9px;color:#f0f0f0;left:70px;letter-spacing:-0.215px;">1 Object Selected</div>
<div class="a t" style="top:625.3px;font-size:7px;line-height:9px;color:#f0f0f0;left:69.6px;letter-spacing:-0.180px;">Click or click-and-drag to select objects</div>
<svg class="a" style="left:629.4px;top:609.6px;" width="8" height="8" viewBox="0 0 8 8"><path d="M0.6 2.4 V0.6 H2.4 M5.6 0.6 H7.4 V2.4 M7.4 5.6 V7.4 H5.6 M2.4 7.4 H0.6 V5.6" fill="none" stroke="#e0e0e0" stroke-width="0.8" stroke-linecap="round" stroke-linejoin="round" /><rect x="2.6" y="2.6" width="2.8" height="2.8" fill="#2fb8a3" /></svg>
<svg class="a" style="left:647.2px;top:609px;" width="7" height="9" viewBox="0 0 7 9"><path d="M1.6 4 V2.6 A1.9 1.9 0 0 1 5.4 2.6 V4" fill="none" stroke="#f0f0f0" stroke-width="1.1" stroke-linecap="round" stroke-linejoin="round" /><rect x="0.6" y="3.8" width="5.8" height="4.8" fill="#f0f0f0" rx="0.6" /><rect x="3" y="5.2" width="1" height="1.8" fill="#333" /></svg>
<svg class="a" style="left:663px;top:609.6px;" width="8.4" height="8.4" viewBox="0 0 8.4 8.4"><rect x="0.4" y="0.4" width="7.6" height="7.6" fill="#ececec" rx="1" /><path d="M4.2 1.2 L5.6 3 H2.8 Z M4.2 7.2 L5.6 5.4 H2.8 Z M1.2 4.2 L3 2.8 V5.6 Z M7.2 4.2 L5.4 2.8 V5.6 Z" fill="#333" /></svg>
<div class="a t" style="top:609.5px;font-size:6.8px;line-height:9px;color:#f0f0f0;left:678px;font-weight:bold;">X:</div>
<div class="a" style="left:686px;top:608.6px;width:40.8px;height:10.4px;background:#5c5c5c;border-radius:1px;"></div>
<div class="a t" style="top:609.5px;font-size:6.6px;line-height:9px;color:#ececec;left:687.8px;overflow:hidden;width:33.8px;">-15331130</div>
<svg class="a" style="left:722.2px;top:610.6px;" width="3.2" height="6" viewBox="0 0 3.2 6"><path d="M1.6 0.2 L3 2.2 H0.2 Z M1.6 5.8 L3 3.8 H0.2 Z" fill="#f0f0f0" /></svg>
<div class="a t" style="top:609.5px;font-size:6.8px;line-height:9px;color:#f0f0f0;left:729.6px;font-weight:bold;">Y:</div>
<div class="a" style="left:736.8px;top:608.6px;width:41.2px;height:10.4px;background:#5c5c5c;border-radius:1px;"></div>
<div class="a t" style="top:609.5px;font-size:6.6px;line-height:9px;color:#ececec;left:738.6px;overflow:hidden;width:34.2px;">24916744,</div>
<svg class="a" style="left:773.4px;top:610.6px;" width="3.2" height="6" viewBox="0 0 3.2 6"><path d="M1.6 0.2 L3 2.2 H0.2 Z M1.6 5.8 L3 3.8 H0.2 Z" fill="#f0f0f0" /></svg>
<div class="a t" style="top:609.5px;font-size:6.8px;line-height:9px;color:#f0f0f0;left:781px;font-weight:bold;">Z:</div>
<div class="a" style="left:789px;top:608.6px;width:41px;height:10.4px;background:#5c5c5c;border-radius:1px;"></div>
<div class="a t" style="top:609.5px;font-size:6.6px;line-height:9px;color:#ececec;left:790.8px;overflow:hidden;width:34px;">3015,0mm</div>
<svg class="a" style="left:825.4px;top:610.6px;" width="3.2" height="6" viewBox="0 0 3.2 6"><path d="M1.6 0.2 L3 2.2 H0.2 Z M1.6 5.8 L3 3.8 H0.2 Z" fill="#f0f0f0" /></svg>
<div class="a t" style="top:609.5px;font-size:6.8px;line-height:9px;color:#f0f0f0;left:833.6px;letter-spacing:-0.096px;">Grid = 100,0mm</div>
<div class="a" style="left:733.3px;top:622.6px;width:1px;height:12.4px;background:#2e2e2e;"></div>
<div class="a" style="left:738.4px;top:623px;width:11.2px;height:11.6px;background:#5c5c5c;border-radius:1px;"></div>
<svg class="a" style="left:740.4px;top:625px;" width="7.4" height="7.6" viewBox="0 0 7.4 7.6"><path d="M3.7 0.4 L7 1.6 C7 4.6 5.8 6.4 3.7 7.4 C1.6 6.4 0.4 4.6 0.4 1.6 Z" fill="#e6e6e6" /><path d="M3.7 1.4 V6.4 M1.4 3.4 H6" fill="none" stroke="#555" stroke-width="0.7" stroke-linecap="round" stroke-linejoin="round" /></svg>
<div class="a t" style="top:624.7px;font-size:6.8px;line-height:9px;color:#f0f0f0;left:753.6px;letter-spacing:-0.131px;">Enabled:</div>
<svg class="a" style="left:782.4px;top:626.2px;" width="6" height="6" viewBox="0 0 6 6"><circle cx="3" cy="3" r="2.6" fill="#38d038" /></svg>
<svg class="a" style="left:793px;top:624.4px;" width="9.4" height="9.4" viewBox="0 0 9.4 9.4"><circle cx="4.7" cy="4.7" r="4.5" fill="#f4f4f4" /><rect x="4.1" y="4" width="1.2" height="3.4" fill="#333" /><circle cx="4.7" cy="2.6" r="0.8" fill="#333" /></svg>
<div class="a" style="left:807.5px;top:622.6px;width:1px;height:12.4px;background:#2e2e2e;"></div>
<svg class="a" style="left:813.4px;top:625px;" width="8" height="8" viewBox="0 0 8 8"><path d="M4 0.6 L7.2 2.4 V5.8 L4 7.6 L0.8 5.8 V2.4 Z M0.8 2.4 L4 4.2 L7.2 2.4 M4 4.2 V7.6" fill="none" stroke="#d8d8d8" stroke-width="0.7" stroke-linecap="round" stroke-linejoin="round" /></svg>
<div class="a t" style="top:624.7px;font-size:6.8px;line-height:9px;color:#f0f0f0;left:827px;letter-spacing:-0.121px;">Add Time Tag</div>
<svg class="a" style="left:901.4px;top:610px;" width="72" height="7" viewBox="0 0 72 7"><path d="M1 0.6 V6.2" fill="none" stroke="#f0f0f0" stroke-width="1" stroke-linecap="round" stroke-linejoin="round" /><path d="M5.6 0.8 L2 3.4 L5.6 6 Z M9.6 0.8 L6 3.4 L9.6 6 Z" fill="#f0f0f0" /><path d="M21.4 0.8 L17.6 3.4 L21.4 6 Z" fill="#f0f0f0" /><path d="M23.4 0.6 V6.2 M25.6 0.6 V6.2" fill="none" stroke="#f0f0f0" stroke-width="1" stroke-linecap="round" stroke-linejoin="round" /><path d="M32.4 -0.6 L39.4 3.4 L32.4 7.4 Z" fill="#f4f4f4" /><path d="M39.6 7.6 h1.6 v-1.6 z" fill="#ddd" /><path d="M45.6 0.6 V6.2 M47.8 0.6 V6.2" fill="none" stroke="#f0f0f0" stroke-width="1" stroke-linecap="round" stroke-linejoin="round" /><path d="M49.8 0.8 L53.6 3.4 L49.8 6 Z" fill="#f0f0f0" /><path d="M61 0.8 L64.6 3.4 L61 6 Z M65 0.8 L68.6 3.4 L65 6 Z" fill="#f0f0f0" /><path d="M69.8 0.6 V6.2" fill="none" stroke="#f0f0f0" stroke-width="1" stroke-linecap="round" stroke-linejoin="round" /></svg>
<svg class="a" style="left:903px;top:625px;" width="9" height="6" viewBox="0 0 9 6"><path d="M0.4 3 L3.6 0.6 V5.4 Z M8.6 3 L5.4 0.6 V5.4 Z" fill="#f0f0f0" /></svg>
<div class="a" style="left:917px;top:622.6px;width:41.4px;height:9.8px;background:#5c5c5c;border-radius:1px;"></div>
<div class="a t" style="top:623.1px;font-size:6.8px;line-height:9px;color:#ececec;left:920px;">0</div>
<svg class="a" style="left:953.4px;top:624.6px;" width="3.2" height="6" viewBox="0 0 3.2 6"><path d="M1.6 0.2 L3 2.2 H0.2 Z M1.6 5.8 L3 3.8 H0.2 Z" fill="#f0f0f0" /></svg>
<svg class="a" style="left:963px;top:623.4px;" width="10" height="9" viewBox="0 0 10 9"><circle cx="3.6" cy="3.6" r="3" fill="#e6e6e6" /><path d="M3.6 1.8 V3.8 H5" fill="none" stroke="#333" stroke-width="0.7" stroke-linecap="round" stroke-linejoin="round" /><circle cx="6.8" cy="6.2" r="2.2" fill="none" stroke="#f3b42c" stroke-width="1.1" /></svg>
<div class="a" style="left:981.8px;top:607.4px;width:25.2px;height:25.4px;background:#5c5c5c;border-radius:2px;"></div>
<svg class="a" style="left:985.4px;top:610.6px;" width="18" height="19" viewBox="0 0 18 19"><path d="M7.6 1 V14.6 M0.8 7.8 H14.4" fill="none" stroke="#f6f6f6" stroke-width="2.6" stroke-linecap="round" stroke-linejoin="round" stroke-linecap="butt"/><path d="M11 16.6 L15.4 12" fill="none" stroke="#2fb8a3" stroke-width="1.2" stroke-linecap="round" stroke-linejoin="round" /><circle cx="10.8" cy="16.6" r="1.5" fill="none" stroke="#2fb8a3" stroke-width="1" /></svg>
<div class="a" style="left:1011px;top:607.8px;width:28px;height:11.6px;background:#5a5a5a;border-radius:1px;"></div>
<div class="a t" style="top:609.3px;font-size:7px;line-height:9px;color:#c8c8c8;left:1010.8px;">Auto Key</div>
<div class="a" style="left:1011px;top:621.8px;width:28px;height:11.6px;background:#5a5a5a;border-radius:1px;"></div>
<div class="a t" style="top:623.3px;font-size:7px;line-height:9px;color:#e0e0e0;left:1012.74px;">Set Key</div>
<div class="a" style="left:1042.4px;top:607.8px;width:69.6px;height:11.6px;background:#5a5a5a;border-radius:1px;"></div>
<div class="a t" style="top:609.3px;font-size:7px;line-height:9px;color:#ececec;left:1044.6px;">Selected</div>
<svg class="a" style="left:1103.6px;top:612.4px;" width="4.4" height="3" viewBox="0 0 4.4 3"><path d="M0 0 H4.4 L2.2 3 Z" fill="#f0f0f0" /></svg>
<svg class="a" style="left:1043.6px;top:622.6px;" width="11" height="10" viewBox="0 0 11 10"><path d="M1 9 L3.4 1.6 M10 9 L7.6 1.6 M3.4 1.6 H7.6" fill="none" stroke="#48c3d8" stroke-width="1" stroke-linecap="round" stroke-linejoin="round" /><path d="M1.8 6.4 L4.6 3.2 M9.2 6.4 L6.4 3.2" fill="none" stroke="#e0e0e0" stroke-width="0.8" stroke-linecap="round" stroke-linejoin="round" /><path d="M9.4 9.8 h1.4 v-1.4 z" fill="#ddd" /></svg>
<div class="a" style="left:1058px;top:621.8px;width:54px;height:11.6px;background:#5a5a5a;border-radius:1px;"></div>
<div class="a t" style="top:623.3px;font-size:7px;line-height:9px;color:#e0e0e0;left:1065.55px;">Key Filters...</div>
<svg class="a" style="left:1118.9px;top:608.4px;" width="11" height="10" viewBox="0 0 11 10"><circle cx="6" cy="4" r="3" fill="none" stroke="#f0f0f0" stroke-width="1.2" /><path d="M3.8 6.2 L1 9.2" fill="none" stroke="#f0f0f0" stroke-width="1.4" stroke-linecap="round" stroke-linejoin="round" /></svg>
<svg class="a" style="left:1132.9px;top:608.4px;" width="11" height="10" viewBox="0 0 11 10"><circle cx="5" cy="5.4" r="2.2" fill="none" stroke="#2fb8a3" stroke-width="1" /><path d="M3.4 7 L1.4 9.2" fill="none" stroke="#2fb8a3" stroke-width="1.1" stroke-linecap="round" stroke-linejoin="round" /><rect x="5.6" y="0.6" width="4" height="4" fill="#2fb8a3" /><rect x="1" y="1" width="2" height="2" fill="#dcdcdc" /></svg>
<svg class="a" style="left:1147.3px;top:608.4px;" width="11" height="10" viewBox="0 0 11 10"><path d="M0.8 3 V0.8 H3 M8 0.8 H10.2 V3 M10.2 7 V9.2 H8 M3 9.2 H0.8 V7" fill="none" stroke="#2fb8a3" stroke-width="1" stroke-linecap="round" stroke-linejoin="round" /><circle cx="5.5" cy="5" r="2.9" fill="#48c3d8" /><path d="M9.6 10 h1.4 v-1.4 z" fill="#ddd" /></svg>
<svg class="a" style="left:1161.9px;top:608.4px;" width="11" height="10" viewBox="0 0 11 10"><rect x="4.8" y="0.6" width="4.8" height="4.8" fill="#2fb8a3" /><path d="M1 8.6 L4.6 5.2 M2 5 H4.8 V7.8" fill="none" stroke="#e0e0e0" stroke-width="0.9" stroke-linecap="round" stroke-linejoin="round" /><rect x="0.8" y="5.6" width="2" height="2" fill="#bbb" /><path d="M9.6 10 h1.4 v-1.4 z" fill="#ddd" /></svg>
<svg class="a" style="left:1118.9px;top:622.6px;" width="11" height="10" viewBox="0 0 11 10"><path d="M1 1.2 L8.6 5 L1 8.8 M1 8.8 C2.6 6.4 2.6 3.6 1 1.2" fill="none" stroke="#f0f0f0" stroke-width="1" stroke-linecap="round" stroke-linejoin="round" /><path d="M9.6 10 h1.4 v-1.4 z" fill="#ddd" /></svg>
<svg class="a" style="left:1132.9px;top:622.6px;" width="11" height="10" viewBox="0 0 11 10"><path d="M3 9.4 C1.4 7.4 0.8 5.6 1.6 5 C2.4 4.6 3 5.4 3.4 6 V1.8 C3.4 0.8 4.6 0.8 4.6 1.8 V1.2 C4.6 0.2 5.8 0.2 5.8 1.2 V1.6 C5.8 0.8 7 0.8 7 1.8 V2.4 C7 1.6 8.2 1.8 8.2 2.8 V6.4 C8.2 7.8 7.6 8.6 7 9.4 Z" fill="#ececec" /><path d="M9.6 10 h1.4 v-1.4 z" fill="#ddd" /></svg>
<svg class="a" style="left:1147.3px;top:622.6px;" width="11" height="10" viewBox="0 0 11 10"><ellipse cx="5" cy="5.6" rx="4.4" ry="2.2" fill="none" stroke="#e0e0e0" stroke-width="0.9" transform="rotate(-28 5 5.6)"/><circle cx="5" cy="5.4" r="1.6" fill="#2fb8a3" /><path d="M7 1.6 L9.4 0.8 L8.8 3.2" fill="none" stroke="#e0e0e0" stroke-width="0.8" stroke-linecap="round" stroke-linejoin="round" /><path d="M9.6 10 h1.4 v-1.4 z" fill="#ddd" /></svg>
<svg class="a" style="left:1161.9px;top:622.6px;" width="11" height="10" viewBox="0 0 11 10"><rect x="0.8" y="0.8" width="9" height="8.4" fill="#f2f2f2" /><rect x="1.6" y="5" width="4" height="3.6" fill="#2c2c2c" /><path d="M5.4 4.8 L8.6 1.8 M6.4 1.6 H8.8 V4" fill="none" stroke="#2c2c2c" stroke-width="0.9" stroke-linecap="round" stroke-linejoin="round" /></svg>
<div class="a" style="left:0px;top:636.6px;width:1180px;height:26.4px;background:#3b3b3b;"></div>
<div class="a" style="left:182px;top:637px;width:29.4px;height:26px;background:#565656;"></div>
<svg class="a" style="left:9.6px;top:644px;" width="11" height="11" viewBox="0 0 11 11"><path d="M0 1.6 L4.8 0.9 V5.2 H0 Z M5.5 0.8 L11 0 V5.2 H5.5 Z M0 5.9 H4.8 V10.2 L0 9.5 Z M5.5 5.9 H11 V11 L5.5 10.2 Z" fill="#f4f4f4" /></svg>
<svg class="a" style="left:39.6px;top:644px;" width="11" height="11" viewBox="0 0 11 11"><circle cx="6.6" cy="4.4" r="3.4" fill="none" stroke="#f0f0f0" stroke-width="1.1" /><path d="M4.2 7 L0.8 10.4" fill="none" stroke="#f0f0f0" stroke-width="1.2" stroke-linecap="round" stroke-linejoin="round" /></svg>
<svg class="a" style="left:69px;top:643.2px;" width="14" height="14" viewBox="0 0 14 14"><circle cx="7" cy="7" r="6.6" fill="#f6c62c" /><text x="6.6" y="9.6" font-size="7" font-weight="bold" fill="#c8281c" text-anchor="middle" font-family="Liberation Sans,sans-serif">1c</text><path d="M8 9.8 H12.4" fill="none" stroke="#c8281c" stroke-width="0.8" stroke-linecap="round" stroke-linejoin="round" /></svg>
<svg class="a" style="left:99px;top:643px;" width="14.4" height="14.4" viewBox="0 0 14.4 14.4"><circle cx="7.2" cy="7.2" r="7" fill="#e8453c" /><path d="M7.2 7.2 L1.1 3.7 A7 7 0 0 0 3.7 13.3 Z" fill="#34a853" /><path d="M7.2 7.2 L3.7 13.3 A7 7 0 0 0 14.2 7.2 Z" fill="#fbc116" /><path d="M7.2 7.2 L14.2 7.2 A7 7 0 0 0 13.3 3.7 L7.2 3.7 Z" fill="#e8453c" /><circle cx="7.2" cy="7.2" r="3.3" fill="#f4f4f4" /><circle cx="7.2" cy="7.2" r="2.6" fill="#4285f4" /></svg>
<svg class="a" style="left:129.6px;top:644px;" width="14" height="12" viewBox="0 0 14 12"><path d="M0.4 1.2 H5 L6.2 2.6 H13.6 V11.2 H0.4 Z" fill="#f0c038" /><rect x="0.4" y="4.2" width="13.2" height="7" fill="#f8d860" /><rect x="3.6" y="7.6" width="6.8" height="3.6" fill="#4aa0e0" /><rect x="5.6" y="8.8" width="2.8" height="1" fill="#f4f4f4" /></svg>
<svg class="a" style="left:159.6px;top:643px;" width="14" height="14.6" viewBox="0 0 14 14.6"><path d="M0.6 2.4 L2.6 0.6 H13.4 V13.8 H2.4 L0.6 12.2 Z" fill="#d6203c" /><path d="M0.6 2.4 L2.6 0.6 V13.8 L0.6 12.2 Z" fill="#9c1428" /><text x="8" y="8.6" font-size="9" font-weight="bold" fill="#fff" text-anchor="middle" font-family="Liberation Sans,sans-serif">A</text><rect x="5" y="10.4" width="6" height="1.6" fill="#f4d8dc" /></svg>
<svg class="a" style="left:190.2px;top:643px;" width="13" height="14.6" viewBox="0 0 13 14.6"><path d="M0.6 2.4 L2.6 0.6 H12.4 V13.8 H2.4 L0.6 12.2 Z" fill="#2a9cc8" /><path d="M0.6 2.4 L2.6 0.6 V13.8 L0.6 12.2 Z" fill="#176a8c" /><text x="7.6" y="8.4" font-size="8.6" font-weight="bold" fill="#fff" text-anchor="middle" font-family="Liberation Sans,sans-serif">3</text><rect x="4.6" y="10.4" width="6" height="1.6" fill="#d0ecf6" /></svg>
<svg class="a" style="left:1043.6px;top:647px;" width="9" height="6" viewBox="0 0 9 6"><path d="M0.8 5 L4.4 1.2 L8 5" fill="none" stroke="#f0f0f0" stroke-width="1" stroke-linecap="round" stroke-linejoin="round" /></svg>
<svg class="a" style="left:1057px;top:645px;" width="11" height="10" viewBox="0 0 11 10"><rect x="2.4" y="0.8" width="8" height="5.6" fill="none" stroke="#f0f0f0" stroke-width="0.9" /><path d="M4.6 8.6 H8.4 M6.4 6.4 V8.6" fill="none" stroke="#f0f0f0" stroke-width="0.9" stroke-linecap="round" stroke-linejoin="round" /><rect x="0.4" y="3" width="3.2" height="6" fill="#3c3c3c" stroke="#f0f0f0" stroke-width="0.8" /></svg>
<svg class="a" style="left:1071.4px;top:645.6px;" width="12" height="8" viewBox="0 0 12 8"><path d="M0.6 2.8 H2.4 L4.8 0.6 V7.4 L2.4 5.2 H0.6 Z" fill="none" stroke="#f0f0f0" stroke-width="0.8" stroke-linecap="round" stroke-linejoin="round" /><path d="M7 2.4 L10 5.6 M10 2.4 L7 5.6" fill="none" stroke="#f0f0f0" stroke-width="0.8" stroke-linecap="round" stroke-linejoin="round" /></svg>
<div class="a t" style="top:645px;font-size:7.2px;line-height:10px;color:#f4f4f4;left:1089.19px;">РУС</div>
<div class="a t" style="top:639.7px;font-size:7px;line-height:9px;color:#f4f4f4;left:1118.04px;">13:38</div>
<div class="a t" style="top:650.5px;font-size:7px;line-height:9px;color:#f4f4f4;left:1110.3px;letter-spacing:-0.203px;">06.04.2023</div>
<svg class="a" style="left:1154.6px;top:644.6px;" width="11" height="11" viewBox="0 0 11 11"><path d="M0.6 0.6 H10.4 V7.6 H5.6 L3 10.2 V7.6 H0.6 Z" fill="#f4f4f4" /><path d="M2.6 3 H8.4 M2.6 5 H8.4" fill="none" stroke="#3c3c3c" stroke-width="0.7" stroke-linecap="round" stroke-linejoin="round" /></svg>
<div class="a" style="left:1176.6px;top:637px;width:0.8px;height:26px;background:#8a8a8a;"></div>
<div class="a" style="left:0px;top:661.4px;width:1180px;height:1.6px;background:#f0f0f0;"></div>
<div class="a" style="left:0px;top:13px;width:1.4px;height:648.4px;background:#e4e4e4;"></div>
<div class="a" style="left:63.6px;top:660.2px;width:25px;height:2.8px;background:#a9c9ee;"></div>
<div class="a" style="left:93.6px;top:660.2px;width:25px;height:2.8px;background:#a9c9ee;"></div>
<div class="a" style="left:154.2px;top:660.2px;width:24.8px;height:2.8px;background:#a9c9ee;"></div>
<div class="a" style="left:182px;top:660.2px;width:29.4px;height:2.8px;background:#a9c9ee;"></div>
</div></body></html>
